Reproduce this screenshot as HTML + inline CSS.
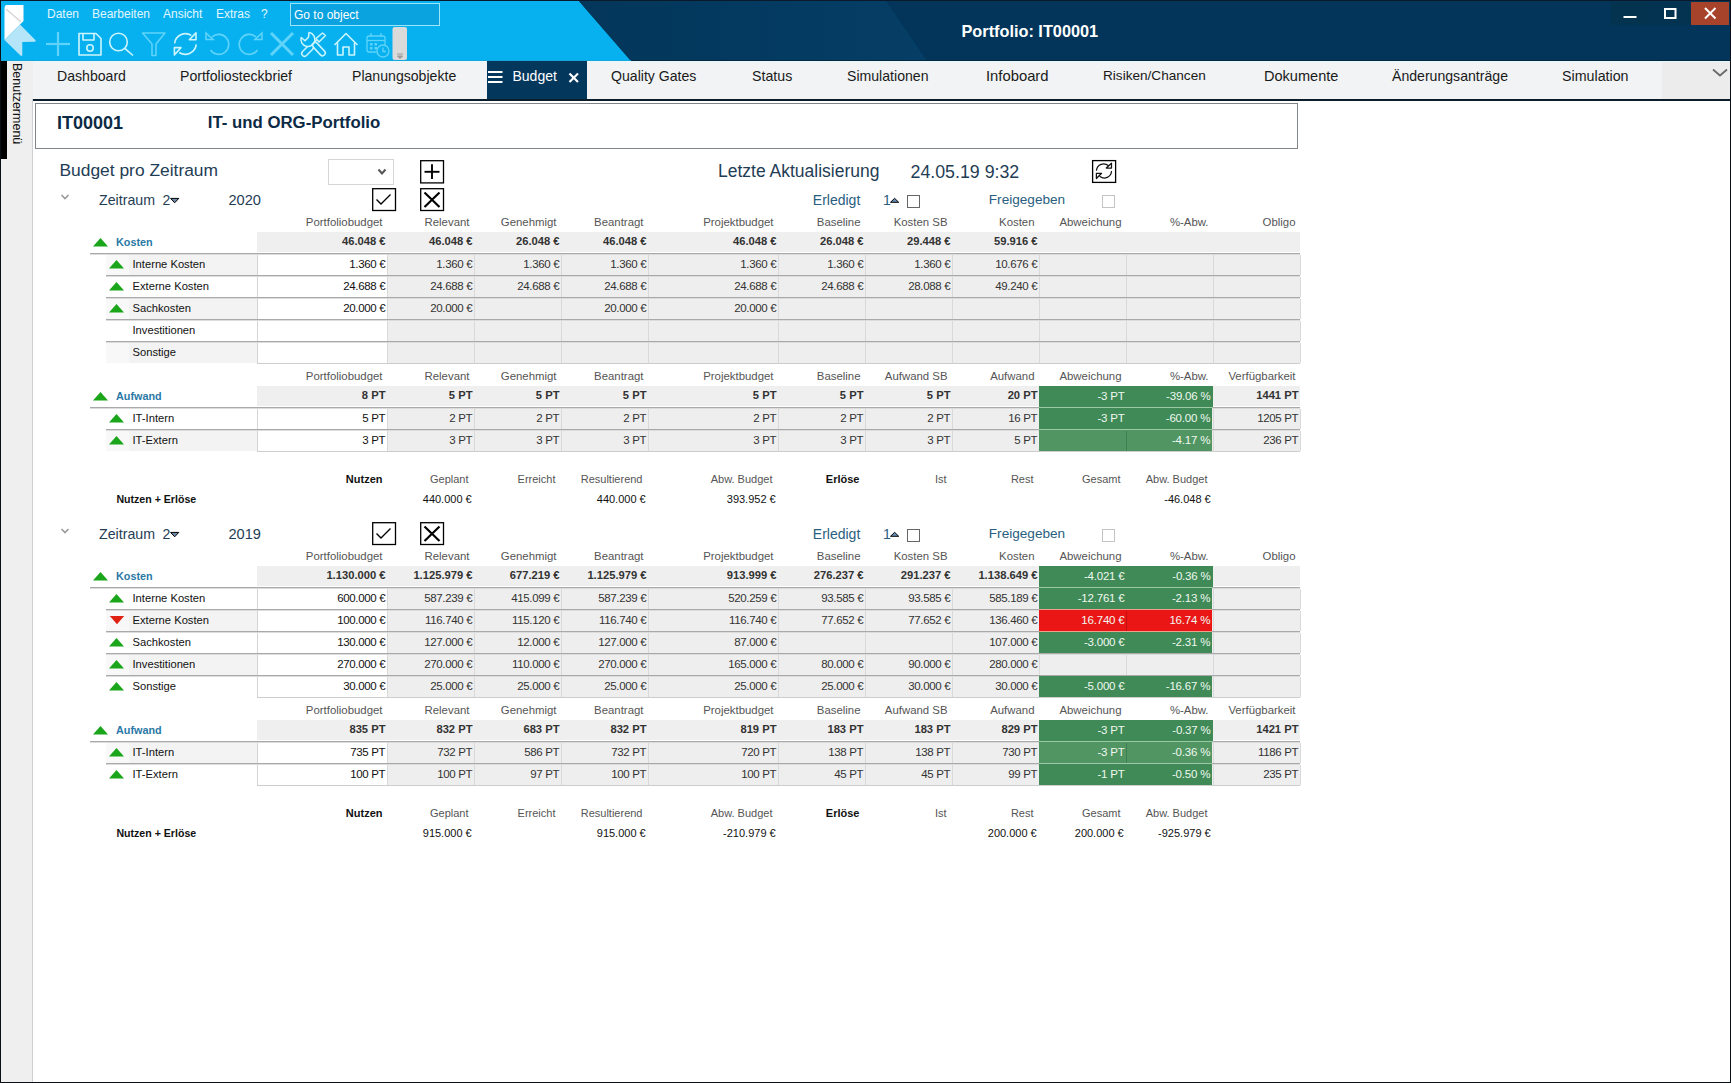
<!DOCTYPE html><html><head><meta charset="utf-8"><style>
html,body{margin:0;padding:0;}
body{width:1731px;height:1083px;overflow:hidden;position:relative;background:#fff;font-family:"Liberation Sans", sans-serif;}
</style></head><body>
<svg style="position:absolute;left:0;top:0" width="1731" height="61"><rect x="0" y="0" width="1731" height="61" fill="#03355a"/><polygon points="578,0 885,0 927,61 631,61" fill="#04395e"/><polygon points="0,0 578,0 631,61 0,61" fill="#07b1ef"/><rect x="0" y="0" width="1731" height="1" fill="#0a1a2a"/><polygon points="5,6 6,5 23.5,5 23.5,21 20,24.6 4.5,40 4.5,8" fill="#ffffff"/><polygon points="20,24.6 35.8,40.5 35,41.8 22.3,42 22.3,55.5 21,56 4.5,40" fill="#b5e5f8"/><line x1="6" y1="9" x2="21" y2="22" stroke="#d6d6d6" stroke-width="1.5"/></svg>
<div style="position:absolute;left:578px;top:1px;width:349px;height:60px;background:linear-gradient(90deg,#03365a,#053e66);clip-path:polygon(0.9px 0,307.7px 0,349px 60px,53px 60px);"></div>
<div style="position:absolute;left:47px;top:4.0px;height:20px;line-height:20px;font-size:12px;color:#e2f6fd;font-weight:400;white-space:nowrap;">Daten</div>
<div style="position:absolute;left:92px;top:4.0px;height:20px;line-height:20px;font-size:12px;color:#e2f6fd;font-weight:400;white-space:nowrap;">Bearbeiten</div>
<div style="position:absolute;left:163px;top:4.0px;height:20px;line-height:20px;font-size:12px;color:#e2f6fd;font-weight:400;white-space:nowrap;">Ansicht</div>
<div style="position:absolute;left:216px;top:4.0px;height:20px;line-height:20px;font-size:12px;color:#e2f6fd;font-weight:400;white-space:nowrap;">Extras</div>
<div style="position:absolute;left:261px;top:4.0px;height:20px;line-height:20px;font-size:12px;color:#e2f6fd;font-weight:400;white-space:nowrap;">?</div>
<div style="position:absolute;left:290px;top:3px;width:148px;height:21px;border:1px solid #9fe5fa;background:#0aa3df;"></div>
<div style="position:absolute;left:294px;top:4.5px;height:20px;line-height:20px;font-size:12px;color:#ffffff;font-weight:400;white-space:nowrap;">Go to object</div>
<svg style="position:absolute;left:0;top:25" width="420" height="36" fill="none" stroke-linecap="butt">
<g stroke="#5fd3f9" stroke-width="2.2"><line x1="46" y1="19" x2="70" y2="19"/><line x1="58" y1="7" x2="58" y2="31"/></g>
<g stroke="#cdf5fe" stroke-width="1.6" stroke-linejoin="round"><path d="M79,8.5 H96 L101,13.5 V30 H79 Z"/><path d="M83,8.5 V15 H94 V8.5"/><circle cx="90" cy="23" r="3.2"/></g>
<g stroke="#cdf5fe" stroke-width="1.6"><circle cx="118.5" cy="17" r="8.8"/><line x1="124.8" y1="23.3" x2="133" y2="30.5"/></g>
<g stroke="#5fd3f9" stroke-width="1.6" stroke-linejoin="round"><path d="M142.5,8 H165 L156,19 V30.5 H152 V19 Z"/></g>
<g stroke="#cdf5fe" stroke-width="1.6" stroke-linejoin="round"><path d="M174.6,18.4 A11,11 0 0 1 191.3,10.4"/><path d="M189.3,14.8 L196,7.9 L196,14.8 Z"/><path d="M196.2,19.4 A11,11 0 0 1 179.2,27.5"/><path d="M174.4,22.6 L181,22.6 L174.4,29.9 Z"/></g>
<g stroke="#5fd3f9" stroke-width="1.6"><path d="M212,12 A10,10 0 1 1 210.5,25"/><path d="M206,8 L206,14.5 L213,14.5 Z"/></g>
<g stroke="#5fd3f9" stroke-width="1.6"><path d="M256,12 A10,10 0 1 0 257.5,25"/><path d="M262,8 L262,14.5 L255,14.5 Z"/></g>
<g stroke="#5fd3f9" stroke-width="3"><line x1="271" y1="8" x2="293" y2="30"/><line x1="293" y1="8" x2="271" y2="30"/></g>
<g stroke="#cdf5fe" stroke-width="1.5" stroke-linejoin="round" stroke-linecap="round"><line x1="315" y1="20" x2="322.5" y2="28" stroke-width="7"/><line x1="315" y1="20" x2="322.5" y2="28" stroke-width="4" stroke="#07b1ef"/><line x1="310.5" y1="22.5" x2="304.5" y2="28.5" stroke-width="7"/><line x1="310.5" y1="22.5" x2="304.5" y2="28.5" stroke-width="4" stroke="#07b1ef"/><path d="M309,7.6 A7,7 0 1 1 301.2,12.5 L305,15.8 L308.5,12.2 Z" fill="#07b1ef"/><path d="M312,19.5 L317.5,14"/><path d="M316,13.5 L322.5,8 L325.5,10.5 L319,17 Z" fill="#07b1ef"/></g>
<g stroke="#cdf5fe" stroke-width="1.6" stroke-linejoin="round"><path d="M334.5,20 L346,8.5 L357.5,20"/><path d="M337.5,17.5 V30 H343 V22 H349 V30 H354.5 V17.5"/></g>
<g stroke="#5fd3f9" stroke-width="1.3"><rect x="367" y="11" width="18" height="16" rx="2"/><line x1="367" y1="15.5" x2="385" y2="15.5"/><line x1="371" y1="8" x2="371" y2="12"/><line x1="381" y1="8" x2="381" y2="12"/><circle cx="383" cy="26" r="6" fill="#07b1ef"/><path d="M383,22.5 V26.5 H386"/></g>
<g fill="#5fd3f9"><rect x="370" y="18" width="2.5" height="2.5"/><rect x="374.5" y="18" width="2.5" height="2.5"/><rect x="370" y="22" width="2.5" height="2.5"/><rect x="374.5" y="22" width="2.5" height="2.5"/></g>
<rect x="392.5" y="2" width="14.5" height="33" rx="2" fill="#dadada"/>
<path d="M397,29 H403 M397.5,31 L400,33.5 L402.5,31 Z" stroke="#9a9a9a" stroke-width="1" fill="#9a9a9a"/>
</svg>
<div style="position:absolute;left:961.5px;top:20.5px;height:20px;line-height:20px;font-size:16.3px;color:#ffffff;font-weight:700;white-space:nowrap;">Portfolio: IT00001</div>
<div style="position:absolute;left:1611px;top:2px;width:39px;height:23px;background:#04334f;"></div>
<div style="position:absolute;left:1650px;top:2px;width:41px;height:23px;background:#043352;"></div>
<div style="position:absolute;left:1691px;top:2px;width:38px;height:23px;background:#a8432b;"></div>
<svg style="position:absolute;left:1600;top:0" width="131" height="30"></svg>
<svg style="position:absolute;left:0;top:0" width="1731" height="30" stroke="#ffffff" fill="none"><line x1="1623.5" y1="17" x2="1636.5" y2="17" stroke-width="2"/><rect x="1665" y="9" width="10.5" height="9" stroke-width="2"/><line x1="1705" y1="8" x2="1715.5" y2="18.5" stroke-width="2"/><line x1="1715.5" y1="8" x2="1705" y2="18.5" stroke-width="2"/></svg>
<div style="position:absolute;left:0px;top:0px;width:1px;height:1083px;background:#0a0f18;"></div>
<div style="position:absolute;left:1730px;top:0px;width:1px;height:1083px;background:#0a0f18;"></div>
<div style="position:absolute;left:0px;top:1082px;width:1731px;height:1px;background:#0a0f18;"></div>
<div style="position:absolute;left:1px;top:61px;width:32px;height:1021px;background:#efefef;"></div>
<div style="position:absolute;left:1px;top:61px;width:6px;height:98px;background:#000;"></div>
<div style="position:absolute;left:32px;top:99px;width:1px;height:983px;background:#cfd0d4;"></div>
<div style="position:absolute;left:9px;top:63px;width:16px;height:84px;writing-mode:vertical-rl;font-size:12.5px;line-height:16px;color:#111;white-space:nowrap;">Benutzermenü</div>
<div style="position:absolute;left:33px;top:61px;width:1697px;height:38px;background:#f1f3f4;"></div>
<div style="position:absolute;left:1662px;top:61px;width:68px;height:38px;background:#ececec;"></div>
<div style="position:absolute;left:33px;top:61px;width:1697px;height:1px;background:#e4f9fd;"></div>
<div style="position:absolute;left:1px;top:60px;width:630px;height:1px;background:#16a6dc;"></div>
<div style="position:absolute;left:631px;top:60px;width:1099px;height:1px;background:#06263c;"></div>
<div style="position:absolute;left:33px;top:99px;width:1697px;height:2px;background:#0b1c2b;"></div>
<div style="position:absolute;left:487px;top:61px;width:100px;height:38px;background:#03375c;"></div>
<div style="position:absolute;left:57px;top:66.3px;height:20px;line-height:20px;font-size:14.1px;color:#1a1a1a;font-weight:400;white-space:nowrap;">Dashboard</div>
<div style="position:absolute;left:180px;top:66.3px;height:20px;line-height:20px;font-size:14.1px;color:#1a1a1a;font-weight:400;white-space:nowrap;">Portfoliosteckbrief</div>
<div style="position:absolute;left:352px;top:66.3px;height:20px;line-height:20px;font-size:14.1px;color:#1a1a1a;font-weight:400;white-space:nowrap;">Planungsobjekte</div>
<div style="position:absolute;left:611px;top:66.3px;height:20px;line-height:20px;font-size:14.1px;color:#1a1a1a;font-weight:400;white-space:nowrap;">Quality Gates</div>
<div style="position:absolute;left:752px;top:66.3px;height:20px;line-height:20px;font-size:14.2px;color:#1a1a1a;font-weight:400;white-space:nowrap;">Status</div>
<div style="position:absolute;left:847px;top:66.3px;height:20px;line-height:20px;font-size:14.1px;color:#1a1a1a;font-weight:400;white-space:nowrap;">Simulationen</div>
<div style="position:absolute;left:986px;top:66.3px;height:20px;line-height:20px;font-size:14.8px;color:#1a1a1a;font-weight:400;white-space:nowrap;">Infoboard</div>
<div style="position:absolute;left:1103px;top:66.3px;height:20px;line-height:20px;font-size:13.6px;color:#1a1a1a;font-weight:400;white-space:nowrap;">Risiken/Chancen</div>
<div style="position:absolute;left:1264px;top:66.3px;height:20px;line-height:20px;font-size:14.55px;color:#1a1a1a;font-weight:400;white-space:nowrap;">Dokumente</div>
<div style="position:absolute;left:1392px;top:66.3px;height:20px;line-height:20px;font-size:14.1px;color:#1a1a1a;font-weight:400;white-space:nowrap;">Änderungsanträge</div>
<div style="position:absolute;left:1562px;top:66.3px;height:20px;line-height:20px;font-size:14.25px;color:#1a1a1a;font-weight:400;white-space:nowrap;">Simulation</div>
<div style="position:absolute;left:512.5px;top:66.0px;height:20px;line-height:20px;font-size:14px;color:#ffffff;font-weight:400;white-space:nowrap;">Budget</div>
<svg style="position:absolute;left:480px;top:61px" width="110" height="38" stroke="#ffffff"><line x1="8" y1="11" x2="22.5" y2="11" stroke-width="2"/><line x1="8" y1="16" x2="22.5" y2="16" stroke-width="2"/><line x1="8" y1="21" x2="22.5" y2="21" stroke-width="2"/><line x1="89.5" y1="12.5" x2="98" y2="21" stroke-width="2.2"/><line x1="98" y1="12.5" x2="89.5" y2="21" stroke-width="2.2"/></svg>
<svg style="position:absolute;left:1708px;top:64px" width="22" height="16"><path d="M5,5.5 L12,11.5 L19,5.5" stroke="#6a6a6a" stroke-width="1.8" fill="none"/></svg>
<div style="position:absolute;left:35px;top:103px;width:1261px;height:44px;border:1px solid #80858a;background:#fff;"></div>
<div style="position:absolute;left:57px;top:113.0px;height:20px;line-height:20px;font-size:18px;color:#0d2a45;font-weight:700;white-space:nowrap;">IT00001</div>
<div style="position:absolute;left:207.8px;top:113.0px;height:20px;line-height:20px;font-size:16.8px;color:#0d2a45;font-weight:700;white-space:nowrap;">IT- und ORG-Portfolio</div>
<div style="position:absolute;left:59.5px;top:160.3px;height:20px;line-height:20px;font-size:17.4px;color:#1f3d55;font-weight:400;white-space:nowrap;">Budget pro Zeitraum</div>
<div style="position:absolute;left:718px;top:160.5px;height:20px;line-height:20px;font-size:17.5px;color:#1f3d55;font-weight:400;white-space:nowrap;">Letzte Aktualisierung</div>
<div style="position:absolute;left:910.5px;top:162.3px;height:20px;line-height:20px;font-size:17.8px;color:#1f3d55;font-weight:400;white-space:nowrap;">24.05.19 9:32</div>
<div style="position:absolute;left:328px;top:159px;width:64px;height:24px;border:1px solid #d6d6d6;background:#fff;"></div>
<svg style="position:absolute;left:376px;top:167px" width="12" height="10"><path d="M2.5,2.5 L6,6.5 L9.5,2.5" stroke="#555" stroke-width="2" fill="none"/></svg>
<svg style="position:absolute;left:419px;top:159px" width="27" height="26"><rect x="1.7" y="1.7" width="22.8" height="22.2" fill="#fff" stroke="#000" stroke-width="1.3"/><line x1="5.5" y1="12.8" x2="20.5" y2="12.8" stroke="#000" stroke-width="1.9"/><line x1="13" y1="5.3" x2="13" y2="20" stroke="#000" stroke-width="1.9"/></svg>
<svg style="position:absolute;left:1091px;top:159px" width="27" height="26"><rect x="1.6" y="1.6" width="23" height="21.8" fill="#fff" stroke="#000" stroke-width="1.3"/><g stroke="#111" stroke-width="1.25" fill="none" stroke-linejoin="round" stroke-linecap="round"><path d="M5.5,11.2 A7.2,7.2 0 0 1 17.3,6.6"/><path d="M15.3,9 L20.5,4.2 L20.5,9 Z"/><path d="M20.5,12.5 A7.2,7.2 0 0 1 9,17.5"/><path d="M5.4,14.3 H10.6 L5.4,19.5 Z"/></g></svg>
<svg style="position:absolute;left:59px;top:192px" width="12" height="10"><path d="M2.5,3 L6,6.5 L9.5,3" stroke="#9a9a9a" stroke-width="1.6" fill="none"/></svg>
<div style="position:absolute;left:99px;top:190.0px;height:20px;line-height:20px;font-size:14.2px;color:#1f3d55;font-weight:400;white-space:nowrap;">Zeitraum</div>
<div style="position:absolute;left:162.5px;top:190.0px;height:20px;line-height:20px;font-size:14px;color:#1f3d55;font-weight:400;white-space:nowrap;">2</div>
<svg style="position:absolute;left:169px;top:196px" width="12" height="9"><path d="M1.6,2.4 L9.8,2.4 L5.7,6.8 Z" fill="#6d88a8" stroke="#000" stroke-width="1" stroke-linejoin="miter"/></svg>
<div style="position:absolute;left:228.5px;top:190.0px;height:20px;line-height:20px;font-size:14.6px;color:#1f3d55;font-weight:400;white-space:nowrap;">2020</div>
<svg style="position:absolute;left:371px;top:187px" width="27" height="26"><rect x="1.7" y="1.7" width="22.8" height="21.8" fill="#fff" stroke="#000" stroke-width="1.3"/><path d="M5.5,12.5 L10,17 L19.5,7.5" stroke="#000" stroke-width="1.4" fill="none"/></svg>
<svg style="position:absolute;left:419px;top:187px" width="27" height="26"><rect x="1.7" y="1.7" width="22.8" height="21.8" fill="#fff" stroke="#000" stroke-width="1.3"/><path d="M5.5,5.5 L20.5,20 M20.5,5.5 L5.5,20" stroke="#000" stroke-width="2.2" fill="none"/></svg>
<div style="position:absolute;left:812.8px;top:190.0px;height:20px;line-height:20px;font-size:14px;color:#2a5e80;font-weight:400;white-space:nowrap;">Erledigt</div>
<div style="position:absolute;left:883px;top:190.0px;height:20px;line-height:20px;font-size:14px;color:#2a5e80;font-weight:400;white-space:nowrap;">1</div>
<svg style="position:absolute;left:889px;top:196px" width="12" height="9"><path d="M1.5,6.3 L9.7,6.3 L5.6,2.3 Z" fill="#6a90b8" stroke="#000" stroke-width="1"/></svg>
<div style="position:absolute;left:907px;top:195px;width:11px;height:11px;border:1.3px solid #666;background:#fff;"></div>
<div style="position:absolute;left:988.8px;top:190.0px;height:20px;line-height:20px;font-size:13.6px;color:#2a5e80;font-weight:400;white-space:nowrap;">Freigegeben</div>
<div style="position:absolute;left:1102px;top:195px;width:11px;height:11px;border:1px solid #c4c4c4;background:#fff;"></div>
<div style="position:absolute;right:1348.5px;top:212.0px;height:20px;line-height:20px;font-size:11.4px;color:#555;font-weight:400;white-space:nowrap;text-align:right;">Portfoliobudget</div>
<div style="position:absolute;right:1261.5px;top:212.0px;height:20px;line-height:20px;font-size:11.4px;color:#555;font-weight:400;white-space:nowrap;text-align:right;">Relevant</div>
<div style="position:absolute;right:1174.5px;top:212.0px;height:20px;line-height:20px;font-size:11.4px;color:#555;font-weight:400;white-space:nowrap;text-align:right;">Genehmigt</div>
<div style="position:absolute;right:1087.5px;top:212.0px;height:20px;line-height:20px;font-size:11.4px;color:#555;font-weight:400;white-space:nowrap;text-align:right;">Beantragt</div>
<div style="position:absolute;right:957.5px;top:212.0px;height:20px;line-height:20px;font-size:11.4px;color:#555;font-weight:400;white-space:nowrap;text-align:right;">Projektbudget</div>
<div style="position:absolute;right:870.5px;top:212.0px;height:20px;line-height:20px;font-size:11.4px;color:#555;font-weight:400;white-space:nowrap;text-align:right;">Baseline</div>
<div style="position:absolute;right:783.5px;top:212.0px;height:20px;line-height:20px;font-size:11.4px;color:#555;font-weight:400;white-space:nowrap;text-align:right;">Kosten SB</div>
<div style="position:absolute;right:696.5px;top:212.0px;height:20px;line-height:20px;font-size:11.4px;color:#555;font-weight:400;white-space:nowrap;text-align:right;">Kosten</div>
<div style="position:absolute;right:609.5px;top:212.0px;height:20px;line-height:20px;font-size:11.4px;color:#555;font-weight:400;white-space:nowrap;text-align:right;">Abweichung</div>
<div style="position:absolute;right:522.5px;top:212.0px;height:20px;line-height:20px;font-size:11.4px;color:#555;font-weight:400;white-space:nowrap;text-align:right;">%-Abw.</div>
<div style="position:absolute;right:435.5px;top:212.0px;height:20px;line-height:20px;font-size:11.4px;color:#555;font-weight:400;white-space:nowrap;text-align:right;">Obligo</div>
<div style="position:absolute;left:257px;top:232px;width:1043px;height:20px;background:#efefef;"></div>
<svg style="position:absolute;left:93px;top:237px" width="17" height="11"><path d="M0,9.6 L7.5,1 L15,9.6 Z" fill="#1aa51a"/></svg>
<div style="position:absolute;left:116px;top:232.2px;height:20px;line-height:20px;font-size:10.8px;color:#2a78a6;font-weight:700;white-space:nowrap;">Kosten</div>
<div style="position:absolute;right:1345.5px;top:231.0px;height:20px;line-height:20px;font-size:11.2px;color:#333;font-weight:700;white-space:nowrap;text-align:right;">46.048 €</div>
<div style="position:absolute;right:1258.5px;top:231.0px;height:20px;line-height:20px;font-size:11.2px;color:#333;font-weight:700;white-space:nowrap;text-align:right;">46.048 €</div>
<div style="position:absolute;right:1171.5px;top:231.0px;height:20px;line-height:20px;font-size:11.2px;color:#333;font-weight:700;white-space:nowrap;text-align:right;">26.048 €</div>
<div style="position:absolute;right:1084.5px;top:231.0px;height:20px;line-height:20px;font-size:11.2px;color:#333;font-weight:700;white-space:nowrap;text-align:right;">46.048 €</div>
<div style="position:absolute;right:954.5px;top:231.0px;height:20px;line-height:20px;font-size:11.2px;color:#333;font-weight:700;white-space:nowrap;text-align:right;">46.048 €</div>
<div style="position:absolute;right:867.5px;top:231.0px;height:20px;line-height:20px;font-size:11.2px;color:#333;font-weight:700;white-space:nowrap;text-align:right;">26.048 €</div>
<div style="position:absolute;right:780.5px;top:231.0px;height:20px;line-height:20px;font-size:11.2px;color:#333;font-weight:700;white-space:nowrap;text-align:right;">29.448 €</div>
<div style="position:absolute;right:693.5px;top:231.0px;height:20px;line-height:20px;font-size:11.2px;color:#333;font-weight:700;white-space:nowrap;text-align:right;">59.916 €</div>
<div style="position:absolute;left:90px;top:253px;width:1210px;height:1px;background:#a9a9a9;"></div>
<div style="position:absolute;left:90px;top:254px;width:1210px;height:1px;background:#dcdcdc;"></div>
<div style="position:absolute;left:106px;top:255px;width:23px;height:20px;background:#f8f8f8;"></div>
<div style="position:absolute;left:129px;top:255px;width:128px;height:20px;background:#f3f3f3;"></div>
<div style="position:absolute;left:257px;top:255px;width:130px;height:20px;background:#ffffff;"></div>
<div style="position:absolute;left:387px;top:255px;width:913px;height:20px;background:#eeeeee;"></div>
<div style="position:absolute;left:257px;top:255px;width:1px;height:20px;background:#d4d4d4;"></div>
<div style="position:absolute;left:387px;top:255px;width:1px;height:20px;background:#d9d9d9;"></div>
<div style="position:absolute;left:474px;top:255px;width:1px;height:20px;background:#d9d9d9;"></div>
<div style="position:absolute;left:561px;top:255px;width:1px;height:20px;background:#d9d9d9;"></div>
<div style="position:absolute;left:648px;top:255px;width:1px;height:20px;background:#d9d9d9;"></div>
<div style="position:absolute;left:778px;top:255px;width:1px;height:20px;background:#d9d9d9;"></div>
<div style="position:absolute;left:865px;top:255px;width:1px;height:20px;background:#d9d9d9;"></div>
<div style="position:absolute;left:952px;top:255px;width:1px;height:20px;background:#d9d9d9;"></div>
<div style="position:absolute;left:1039px;top:255px;width:1px;height:20px;background:#d9d9d9;"></div>
<div style="position:absolute;left:1126px;top:255px;width:1px;height:20px;background:#d9d9d9;"></div>
<div style="position:absolute;left:1213px;top:255px;width:1px;height:20px;background:#d9d9d9;"></div>
<div style="position:absolute;left:1300px;top:255px;width:1px;height:20px;background:#d9d9d9;"></div>
<svg style="position:absolute;left:109px;top:259px" width="17" height="11"><path d="M0,9.6 L7.5,1 L15,9.6 Z" fill="#1aa51a"/></svg>
<div style="position:absolute;left:132.5px;top:253.7px;height:20px;line-height:20px;font-size:11.2px;color:#111;font-weight:400;white-space:nowrap;">Interne Kosten</div>
<div style="position:absolute;right:1345.8px;top:253.7px;height:20px;line-height:20px;font-size:11.5px;color:#111;font-weight:400;white-space:nowrap;text-align:right;letter-spacing:-0.35px;">1.360 €</div>
<div style="position:absolute;right:1258.8px;top:253.7px;height:20px;line-height:20px;font-size:11.5px;color:#333;font-weight:400;white-space:nowrap;text-align:right;letter-spacing:-0.35px;">1.360 €</div>
<div style="position:absolute;right:1171.8px;top:253.7px;height:20px;line-height:20px;font-size:11.5px;color:#333;font-weight:400;white-space:nowrap;text-align:right;letter-spacing:-0.35px;">1.360 €</div>
<div style="position:absolute;right:1084.8px;top:253.7px;height:20px;line-height:20px;font-size:11.5px;color:#333;font-weight:400;white-space:nowrap;text-align:right;letter-spacing:-0.35px;">1.360 €</div>
<div style="position:absolute;right:954.8px;top:253.7px;height:20px;line-height:20px;font-size:11.5px;color:#333;font-weight:400;white-space:nowrap;text-align:right;letter-spacing:-0.35px;">1.360 €</div>
<div style="position:absolute;right:867.8px;top:253.7px;height:20px;line-height:20px;font-size:11.5px;color:#333;font-weight:400;white-space:nowrap;text-align:right;letter-spacing:-0.35px;">1.360 €</div>
<div style="position:absolute;right:780.8px;top:253.7px;height:20px;line-height:20px;font-size:11.5px;color:#333;font-weight:400;white-space:nowrap;text-align:right;letter-spacing:-0.35px;">1.360 €</div>
<div style="position:absolute;right:693.8000000000002px;top:253.7px;height:20px;line-height:20px;font-size:11.5px;color:#333;font-weight:400;white-space:nowrap;text-align:right;letter-spacing:-0.35px;">10.676 €</div>
<div style="position:absolute;left:106px;top:275px;width:1194px;height:1px;background:#a9a9a9;"></div>
<div style="position:absolute;left:106px;top:276px;width:1194px;height:1px;background:#dcdcdc;"></div>
<div style="position:absolute;left:257px;top:277px;width:130px;height:20px;background:#ffffff;"></div>
<div style="position:absolute;left:387px;top:277px;width:913px;height:20px;background:#eeeeee;"></div>
<div style="position:absolute;left:257px;top:277px;width:1px;height:20px;background:#d4d4d4;"></div>
<div style="position:absolute;left:387px;top:277px;width:1px;height:20px;background:#d9d9d9;"></div>
<div style="position:absolute;left:474px;top:277px;width:1px;height:20px;background:#d9d9d9;"></div>
<div style="position:absolute;left:561px;top:277px;width:1px;height:20px;background:#d9d9d9;"></div>
<div style="position:absolute;left:648px;top:277px;width:1px;height:20px;background:#d9d9d9;"></div>
<div style="position:absolute;left:778px;top:277px;width:1px;height:20px;background:#d9d9d9;"></div>
<div style="position:absolute;left:865px;top:277px;width:1px;height:20px;background:#d9d9d9;"></div>
<div style="position:absolute;left:952px;top:277px;width:1px;height:20px;background:#d9d9d9;"></div>
<div style="position:absolute;left:1039px;top:277px;width:1px;height:20px;background:#d9d9d9;"></div>
<div style="position:absolute;left:1126px;top:277px;width:1px;height:20px;background:#d9d9d9;"></div>
<div style="position:absolute;left:1213px;top:277px;width:1px;height:20px;background:#d9d9d9;"></div>
<div style="position:absolute;left:1300px;top:277px;width:1px;height:20px;background:#d9d9d9;"></div>
<svg style="position:absolute;left:109px;top:281px" width="17" height="11"><path d="M0,9.6 L7.5,1 L15,9.6 Z" fill="#1aa51a"/></svg>
<div style="position:absolute;left:132.5px;top:275.7px;height:20px;line-height:20px;font-size:11.2px;color:#111;font-weight:400;white-space:nowrap;">Externe Kosten</div>
<div style="position:absolute;right:1345.8px;top:275.7px;height:20px;line-height:20px;font-size:11.5px;color:#111;font-weight:400;white-space:nowrap;text-align:right;letter-spacing:-0.35px;">24.688 €</div>
<div style="position:absolute;right:1258.8px;top:275.7px;height:20px;line-height:20px;font-size:11.5px;color:#333;font-weight:400;white-space:nowrap;text-align:right;letter-spacing:-0.35px;">24.688 €</div>
<div style="position:absolute;right:1171.8px;top:275.7px;height:20px;line-height:20px;font-size:11.5px;color:#333;font-weight:400;white-space:nowrap;text-align:right;letter-spacing:-0.35px;">24.688 €</div>
<div style="position:absolute;right:1084.8px;top:275.7px;height:20px;line-height:20px;font-size:11.5px;color:#333;font-weight:400;white-space:nowrap;text-align:right;letter-spacing:-0.35px;">24.688 €</div>
<div style="position:absolute;right:954.8px;top:275.7px;height:20px;line-height:20px;font-size:11.5px;color:#333;font-weight:400;white-space:nowrap;text-align:right;letter-spacing:-0.35px;">24.688 €</div>
<div style="position:absolute;right:867.8px;top:275.7px;height:20px;line-height:20px;font-size:11.5px;color:#333;font-weight:400;white-space:nowrap;text-align:right;letter-spacing:-0.35px;">24.688 €</div>
<div style="position:absolute;right:780.8px;top:275.7px;height:20px;line-height:20px;font-size:11.5px;color:#333;font-weight:400;white-space:nowrap;text-align:right;letter-spacing:-0.35px;">28.088 €</div>
<div style="position:absolute;right:693.8000000000002px;top:275.7px;height:20px;line-height:20px;font-size:11.5px;color:#333;font-weight:400;white-space:nowrap;text-align:right;letter-spacing:-0.35px;">49.240 €</div>
<div style="position:absolute;left:106px;top:297px;width:1194px;height:1px;background:#a9a9a9;"></div>
<div style="position:absolute;left:106px;top:298px;width:1194px;height:1px;background:#dcdcdc;"></div>
<div style="position:absolute;left:106px;top:299px;width:23px;height:20px;background:#f8f8f8;"></div>
<div style="position:absolute;left:129px;top:299px;width:128px;height:20px;background:#f3f3f3;"></div>
<div style="position:absolute;left:257px;top:299px;width:130px;height:20px;background:#ffffff;"></div>
<div style="position:absolute;left:387px;top:299px;width:913px;height:20px;background:#eeeeee;"></div>
<div style="position:absolute;left:257px;top:299px;width:1px;height:20px;background:#d4d4d4;"></div>
<div style="position:absolute;left:387px;top:299px;width:1px;height:20px;background:#d9d9d9;"></div>
<div style="position:absolute;left:474px;top:299px;width:1px;height:20px;background:#d9d9d9;"></div>
<div style="position:absolute;left:561px;top:299px;width:1px;height:20px;background:#d9d9d9;"></div>
<div style="position:absolute;left:648px;top:299px;width:1px;height:20px;background:#d9d9d9;"></div>
<div style="position:absolute;left:778px;top:299px;width:1px;height:20px;background:#d9d9d9;"></div>
<div style="position:absolute;left:865px;top:299px;width:1px;height:20px;background:#d9d9d9;"></div>
<div style="position:absolute;left:952px;top:299px;width:1px;height:20px;background:#d9d9d9;"></div>
<div style="position:absolute;left:1039px;top:299px;width:1px;height:20px;background:#d9d9d9;"></div>
<div style="position:absolute;left:1126px;top:299px;width:1px;height:20px;background:#d9d9d9;"></div>
<div style="position:absolute;left:1213px;top:299px;width:1px;height:20px;background:#d9d9d9;"></div>
<div style="position:absolute;left:1300px;top:299px;width:1px;height:20px;background:#d9d9d9;"></div>
<svg style="position:absolute;left:109px;top:303px" width="17" height="11"><path d="M0,9.6 L7.5,1 L15,9.6 Z" fill="#1aa51a"/></svg>
<div style="position:absolute;left:132.5px;top:297.7px;height:20px;line-height:20px;font-size:11.2px;color:#111;font-weight:400;white-space:nowrap;">Sachkosten</div>
<div style="position:absolute;right:1345.8px;top:297.7px;height:20px;line-height:20px;font-size:11.5px;color:#111;font-weight:400;white-space:nowrap;text-align:right;letter-spacing:-0.35px;">20.000 €</div>
<div style="position:absolute;right:1258.8px;top:297.7px;height:20px;line-height:20px;font-size:11.5px;color:#333;font-weight:400;white-space:nowrap;text-align:right;letter-spacing:-0.35px;">20.000 €</div>
<div style="position:absolute;right:1084.8px;top:297.7px;height:20px;line-height:20px;font-size:11.5px;color:#333;font-weight:400;white-space:nowrap;text-align:right;letter-spacing:-0.35px;">20.000 €</div>
<div style="position:absolute;right:954.8px;top:297.7px;height:20px;line-height:20px;font-size:11.5px;color:#333;font-weight:400;white-space:nowrap;text-align:right;letter-spacing:-0.35px;">20.000 €</div>
<div style="position:absolute;left:106px;top:319px;width:1194px;height:1px;background:#a9a9a9;"></div>
<div style="position:absolute;left:106px;top:320px;width:1194px;height:1px;background:#dcdcdc;"></div>
<div style="position:absolute;left:257px;top:321px;width:130px;height:20px;background:#ffffff;"></div>
<div style="position:absolute;left:387px;top:321px;width:913px;height:20px;background:#eeeeee;"></div>
<div style="position:absolute;left:257px;top:321px;width:1px;height:20px;background:#d4d4d4;"></div>
<div style="position:absolute;left:387px;top:321px;width:1px;height:20px;background:#d9d9d9;"></div>
<div style="position:absolute;left:474px;top:321px;width:1px;height:20px;background:#d9d9d9;"></div>
<div style="position:absolute;left:561px;top:321px;width:1px;height:20px;background:#d9d9d9;"></div>
<div style="position:absolute;left:648px;top:321px;width:1px;height:20px;background:#d9d9d9;"></div>
<div style="position:absolute;left:778px;top:321px;width:1px;height:20px;background:#d9d9d9;"></div>
<div style="position:absolute;left:865px;top:321px;width:1px;height:20px;background:#d9d9d9;"></div>
<div style="position:absolute;left:952px;top:321px;width:1px;height:20px;background:#d9d9d9;"></div>
<div style="position:absolute;left:1039px;top:321px;width:1px;height:20px;background:#d9d9d9;"></div>
<div style="position:absolute;left:1126px;top:321px;width:1px;height:20px;background:#d9d9d9;"></div>
<div style="position:absolute;left:1213px;top:321px;width:1px;height:20px;background:#d9d9d9;"></div>
<div style="position:absolute;left:1300px;top:321px;width:1px;height:20px;background:#d9d9d9;"></div>
<div style="position:absolute;left:132.5px;top:319.7px;height:20px;line-height:20px;font-size:11.2px;color:#111;font-weight:400;white-space:nowrap;">Investitionen</div>
<div style="position:absolute;left:106px;top:341px;width:1194px;height:1px;background:#a9a9a9;"></div>
<div style="position:absolute;left:106px;top:342px;width:1194px;height:1px;background:#dcdcdc;"></div>
<div style="position:absolute;left:106px;top:343px;width:23px;height:20px;background:#f8f8f8;"></div>
<div style="position:absolute;left:129px;top:343px;width:128px;height:20px;background:#f3f3f3;"></div>
<div style="position:absolute;left:257px;top:343px;width:130px;height:20px;background:#ffffff;"></div>
<div style="position:absolute;left:387px;top:343px;width:913px;height:20px;background:#eeeeee;"></div>
<div style="position:absolute;left:257px;top:343px;width:1px;height:20px;background:#d4d4d4;"></div>
<div style="position:absolute;left:387px;top:343px;width:1px;height:20px;background:#d9d9d9;"></div>
<div style="position:absolute;left:474px;top:343px;width:1px;height:20px;background:#d9d9d9;"></div>
<div style="position:absolute;left:561px;top:343px;width:1px;height:20px;background:#d9d9d9;"></div>
<div style="position:absolute;left:648px;top:343px;width:1px;height:20px;background:#d9d9d9;"></div>
<div style="position:absolute;left:778px;top:343px;width:1px;height:20px;background:#d9d9d9;"></div>
<div style="position:absolute;left:865px;top:343px;width:1px;height:20px;background:#d9d9d9;"></div>
<div style="position:absolute;left:952px;top:343px;width:1px;height:20px;background:#d9d9d9;"></div>
<div style="position:absolute;left:1039px;top:343px;width:1px;height:20px;background:#d9d9d9;"></div>
<div style="position:absolute;left:1126px;top:343px;width:1px;height:20px;background:#d9d9d9;"></div>
<div style="position:absolute;left:1213px;top:343px;width:1px;height:20px;background:#d9d9d9;"></div>
<div style="position:absolute;left:1300px;top:343px;width:1px;height:20px;background:#d9d9d9;"></div>
<div style="position:absolute;left:132.5px;top:341.7px;height:20px;line-height:20px;font-size:11.2px;color:#111;font-weight:400;white-space:nowrap;">Sonstige</div>
<div style="position:absolute;left:257px;top:363px;width:1043px;height:1px;background:#cdcdcd;"></div>
<div style="position:absolute;right:1348.5px;top:366.0px;height:20px;line-height:20px;font-size:11.4px;color:#555;font-weight:400;white-space:nowrap;text-align:right;">Portfoliobudget</div>
<div style="position:absolute;right:1261.5px;top:366.0px;height:20px;line-height:20px;font-size:11.4px;color:#555;font-weight:400;white-space:nowrap;text-align:right;">Relevant</div>
<div style="position:absolute;right:1174.5px;top:366.0px;height:20px;line-height:20px;font-size:11.4px;color:#555;font-weight:400;white-space:nowrap;text-align:right;">Genehmigt</div>
<div style="position:absolute;right:1087.5px;top:366.0px;height:20px;line-height:20px;font-size:11.4px;color:#555;font-weight:400;white-space:nowrap;text-align:right;">Beantragt</div>
<div style="position:absolute;right:957.5px;top:366.0px;height:20px;line-height:20px;font-size:11.4px;color:#555;font-weight:400;white-space:nowrap;text-align:right;">Projektbudget</div>
<div style="position:absolute;right:870.5px;top:366.0px;height:20px;line-height:20px;font-size:11.4px;color:#555;font-weight:400;white-space:nowrap;text-align:right;">Baseline</div>
<div style="position:absolute;right:783.5px;top:366.0px;height:20px;line-height:20px;font-size:11.4px;color:#555;font-weight:400;white-space:nowrap;text-align:right;">Aufwand SB</div>
<div style="position:absolute;right:696.5px;top:366.0px;height:20px;line-height:20px;font-size:11.4px;color:#555;font-weight:400;white-space:nowrap;text-align:right;">Aufwand</div>
<div style="position:absolute;right:609.5px;top:366.0px;height:20px;line-height:20px;font-size:11.4px;color:#555;font-weight:400;white-space:nowrap;text-align:right;">Abweichung</div>
<div style="position:absolute;right:522.5px;top:366.0px;height:20px;line-height:20px;font-size:11.4px;color:#555;font-weight:400;white-space:nowrap;text-align:right;">%-Abw.</div>
<div style="position:absolute;right:435.5px;top:366.0px;height:20px;line-height:20px;font-size:11.4px;color:#555;font-weight:400;white-space:nowrap;text-align:right;">Verfügbarkeit</div>
<div style="position:absolute;left:257px;top:386px;width:1043px;height:20px;background:#efefef;"></div>
<svg style="position:absolute;left:93px;top:391px" width="17" height="11"><path d="M0,9.6 L7.5,1 L15,9.6 Z" fill="#1aa51a"/></svg>
<div style="position:absolute;left:116px;top:386.2px;height:20px;line-height:20px;font-size:10.8px;color:#2a78a6;font-weight:700;white-space:nowrap;">Aufwand</div>
<div style="position:absolute;left:1039px;top:386px;width:87px;height:20px;background:#3f8a57;"></div>
<div style="position:absolute;left:1126px;top:386px;width:87px;height:20px;background:#3f8a57;"></div>
<div style="position:absolute;right:1345.5px;top:385.0px;height:20px;line-height:20px;font-size:11.2px;color:#333;font-weight:700;white-space:nowrap;text-align:right;">8 PT</div>
<div style="position:absolute;right:1258.5px;top:385.0px;height:20px;line-height:20px;font-size:11.2px;color:#333;font-weight:700;white-space:nowrap;text-align:right;">5 PT</div>
<div style="position:absolute;right:1171.5px;top:385.0px;height:20px;line-height:20px;font-size:11.2px;color:#333;font-weight:700;white-space:nowrap;text-align:right;">5 PT</div>
<div style="position:absolute;right:1084.5px;top:385.0px;height:20px;line-height:20px;font-size:11.2px;color:#333;font-weight:700;white-space:nowrap;text-align:right;">5 PT</div>
<div style="position:absolute;right:954.5px;top:385.0px;height:20px;line-height:20px;font-size:11.2px;color:#333;font-weight:700;white-space:nowrap;text-align:right;">5 PT</div>
<div style="position:absolute;right:867.5px;top:385.0px;height:20px;line-height:20px;font-size:11.2px;color:#333;font-weight:700;white-space:nowrap;text-align:right;">5 PT</div>
<div style="position:absolute;right:780.5px;top:385.0px;height:20px;line-height:20px;font-size:11.2px;color:#333;font-weight:700;white-space:nowrap;text-align:right;">5 PT</div>
<div style="position:absolute;right:693.5px;top:385.0px;height:20px;line-height:20px;font-size:11.2px;color:#333;font-weight:700;white-space:nowrap;text-align:right;">20 PT</div>
<div style="position:absolute;right:606.5px;top:385.5px;height:20px;line-height:20px;font-size:11.5px;color:#f0f8f0;font-weight:400;white-space:nowrap;text-align:right;letter-spacing:-0.2px;">-3 PT</div>
<div style="position:absolute;right:520.5px;top:385.5px;height:20px;line-height:20px;font-size:11.5px;color:#f0f8f0;font-weight:400;white-space:nowrap;text-align:right;letter-spacing:-0.2px;">-39.06 %</div>
<div style="position:absolute;right:432.5px;top:385.0px;height:20px;line-height:20px;font-size:11.2px;color:#333;font-weight:700;white-space:nowrap;text-align:right;">1441 PT</div>
<div style="position:absolute;left:90px;top:407px;width:1210px;height:1px;background:#a9a9a9;"></div>
<div style="position:absolute;left:90px;top:408px;width:1210px;height:1px;background:#dcdcdc;"></div>
<div style="position:absolute;left:257px;top:409px;width:130px;height:20px;background:#ffffff;"></div>
<div style="position:absolute;left:387px;top:409px;width:913px;height:20px;background:#eeeeee;"></div>
<div style="position:absolute;left:257px;top:409px;width:1px;height:20px;background:#d4d4d4;"></div>
<div style="position:absolute;left:387px;top:409px;width:1px;height:20px;background:#d9d9d9;"></div>
<div style="position:absolute;left:474px;top:409px;width:1px;height:20px;background:#d9d9d9;"></div>
<div style="position:absolute;left:561px;top:409px;width:1px;height:20px;background:#d9d9d9;"></div>
<div style="position:absolute;left:648px;top:409px;width:1px;height:20px;background:#d9d9d9;"></div>
<div style="position:absolute;left:778px;top:409px;width:1px;height:20px;background:#d9d9d9;"></div>
<div style="position:absolute;left:865px;top:409px;width:1px;height:20px;background:#d9d9d9;"></div>
<div style="position:absolute;left:952px;top:409px;width:1px;height:20px;background:#d9d9d9;"></div>
<div style="position:absolute;left:1039px;top:409px;width:1px;height:20px;background:#d9d9d9;"></div>
<div style="position:absolute;left:1126px;top:409px;width:1px;height:20px;background:#d9d9d9;"></div>
<div style="position:absolute;left:1213px;top:409px;width:1px;height:20px;background:#d9d9d9;"></div>
<div style="position:absolute;left:1300px;top:409px;width:1px;height:20px;background:#d9d9d9;"></div>
<div style="position:absolute;left:1039px;top:409px;width:87px;height:20px;background:#3f8a57;"></div>
<div style="position:absolute;left:1126px;top:409px;width:86px;height:20px;background:#3f8a57;"></div>
<svg style="position:absolute;left:109px;top:413px" width="17" height="11"><path d="M0,9.6 L7.5,1 L15,9.6 Z" fill="#1aa51a"/></svg>
<div style="position:absolute;left:132.5px;top:407.7px;height:20px;line-height:20px;font-size:11.2px;color:#111;font-weight:400;white-space:nowrap;">IT-Intern</div>
<div style="position:absolute;right:1345.8px;top:407.7px;height:20px;line-height:20px;font-size:11.5px;color:#111;font-weight:400;white-space:nowrap;text-align:right;letter-spacing:-0.35px;">5 PT</div>
<div style="position:absolute;right:1258.8px;top:407.7px;height:20px;line-height:20px;font-size:11.5px;color:#333;font-weight:400;white-space:nowrap;text-align:right;letter-spacing:-0.35px;">2 PT</div>
<div style="position:absolute;right:1171.8px;top:407.7px;height:20px;line-height:20px;font-size:11.5px;color:#333;font-weight:400;white-space:nowrap;text-align:right;letter-spacing:-0.35px;">2 PT</div>
<div style="position:absolute;right:1084.8px;top:407.7px;height:20px;line-height:20px;font-size:11.5px;color:#333;font-weight:400;white-space:nowrap;text-align:right;letter-spacing:-0.35px;">2 PT</div>
<div style="position:absolute;right:954.8px;top:407.7px;height:20px;line-height:20px;font-size:11.5px;color:#333;font-weight:400;white-space:nowrap;text-align:right;letter-spacing:-0.35px;">2 PT</div>
<div style="position:absolute;right:867.8px;top:407.7px;height:20px;line-height:20px;font-size:11.5px;color:#333;font-weight:400;white-space:nowrap;text-align:right;letter-spacing:-0.35px;">2 PT</div>
<div style="position:absolute;right:780.8px;top:407.7px;height:20px;line-height:20px;font-size:11.5px;color:#333;font-weight:400;white-space:nowrap;text-align:right;letter-spacing:-0.35px;">2 PT</div>
<div style="position:absolute;right:693.8000000000002px;top:407.7px;height:20px;line-height:20px;font-size:11.5px;color:#333;font-weight:400;white-space:nowrap;text-align:right;letter-spacing:-0.35px;">16 PT</div>
<div style="position:absolute;right:606.5px;top:407.7px;height:20px;line-height:20px;font-size:11.5px;color:#f0f8f0;font-weight:400;white-space:nowrap;text-align:right;letter-spacing:-0.2px;">-3 PT</div>
<div style="position:absolute;right:520.8px;top:407.7px;height:20px;line-height:20px;font-size:11.5px;color:#f0f8f0;font-weight:400;white-space:nowrap;text-align:right;letter-spacing:-0.2px;">-60.00 %</div>
<div style="position:absolute;right:432.8000000000002px;top:407.7px;height:20px;line-height:20px;font-size:11.5px;color:#333;font-weight:400;white-space:nowrap;text-align:right;letter-spacing:-0.35px;">1205 PT</div>
<div style="position:absolute;left:106px;top:429px;width:1194px;height:1px;background:#a9a9a9;"></div>
<div style="position:absolute;left:106px;top:430px;width:1194px;height:1px;background:#dcdcdc;"></div>
<div style="position:absolute;left:106px;top:431px;width:23px;height:20px;background:#f8f8f8;"></div>
<div style="position:absolute;left:129px;top:431px;width:128px;height:20px;background:#f3f3f3;"></div>
<div style="position:absolute;left:257px;top:431px;width:130px;height:20px;background:#ffffff;"></div>
<div style="position:absolute;left:387px;top:431px;width:913px;height:20px;background:#eeeeee;"></div>
<div style="position:absolute;left:257px;top:431px;width:1px;height:20px;background:#d4d4d4;"></div>
<div style="position:absolute;left:387px;top:431px;width:1px;height:20px;background:#d9d9d9;"></div>
<div style="position:absolute;left:474px;top:431px;width:1px;height:20px;background:#d9d9d9;"></div>
<div style="position:absolute;left:561px;top:431px;width:1px;height:20px;background:#d9d9d9;"></div>
<div style="position:absolute;left:648px;top:431px;width:1px;height:20px;background:#d9d9d9;"></div>
<div style="position:absolute;left:778px;top:431px;width:1px;height:20px;background:#d9d9d9;"></div>
<div style="position:absolute;left:865px;top:431px;width:1px;height:20px;background:#d9d9d9;"></div>
<div style="position:absolute;left:952px;top:431px;width:1px;height:20px;background:#d9d9d9;"></div>
<div style="position:absolute;left:1039px;top:431px;width:1px;height:20px;background:#d9d9d9;"></div>
<div style="position:absolute;left:1126px;top:431px;width:1px;height:20px;background:#d9d9d9;"></div>
<div style="position:absolute;left:1213px;top:431px;width:1px;height:20px;background:#d9d9d9;"></div>
<div style="position:absolute;left:1300px;top:431px;width:1px;height:20px;background:#d9d9d9;"></div>
<div style="position:absolute;left:1039px;top:431px;width:87px;height:20px;background:#519563;"></div>
<div style="position:absolute;left:1126px;top:431px;width:86px;height:20px;background:#519563;"></div>
<div style="position:absolute;left:1126px;top:431px;width:1px;height:20px;background:#3f7f52;"></div>
<svg style="position:absolute;left:109px;top:435px" width="17" height="11"><path d="M0,9.6 L7.5,1 L15,9.6 Z" fill="#1aa51a"/></svg>
<div style="position:absolute;left:132.5px;top:429.7px;height:20px;line-height:20px;font-size:11.2px;color:#111;font-weight:400;white-space:nowrap;">IT-Extern</div>
<div style="position:absolute;right:1345.8px;top:429.7px;height:20px;line-height:20px;font-size:11.5px;color:#111;font-weight:400;white-space:nowrap;text-align:right;letter-spacing:-0.35px;">3 PT</div>
<div style="position:absolute;right:1258.8px;top:429.7px;height:20px;line-height:20px;font-size:11.5px;color:#333;font-weight:400;white-space:nowrap;text-align:right;letter-spacing:-0.35px;">3 PT</div>
<div style="position:absolute;right:1171.8px;top:429.7px;height:20px;line-height:20px;font-size:11.5px;color:#333;font-weight:400;white-space:nowrap;text-align:right;letter-spacing:-0.35px;">3 PT</div>
<div style="position:absolute;right:1084.8px;top:429.7px;height:20px;line-height:20px;font-size:11.5px;color:#333;font-weight:400;white-space:nowrap;text-align:right;letter-spacing:-0.35px;">3 PT</div>
<div style="position:absolute;right:954.8px;top:429.7px;height:20px;line-height:20px;font-size:11.5px;color:#333;font-weight:400;white-space:nowrap;text-align:right;letter-spacing:-0.35px;">3 PT</div>
<div style="position:absolute;right:867.8px;top:429.7px;height:20px;line-height:20px;font-size:11.5px;color:#333;font-weight:400;white-space:nowrap;text-align:right;letter-spacing:-0.35px;">3 PT</div>
<div style="position:absolute;right:780.8px;top:429.7px;height:20px;line-height:20px;font-size:11.5px;color:#333;font-weight:400;white-space:nowrap;text-align:right;letter-spacing:-0.35px;">3 PT</div>
<div style="position:absolute;right:693.8000000000002px;top:429.7px;height:20px;line-height:20px;font-size:11.5px;color:#333;font-weight:400;white-space:nowrap;text-align:right;letter-spacing:-0.35px;">5 PT</div>
<div style="position:absolute;right:520.8px;top:429.7px;height:20px;line-height:20px;font-size:11.5px;color:#f0f8f0;font-weight:400;white-space:nowrap;text-align:right;letter-spacing:-0.2px;">-4.17 %</div>
<div style="position:absolute;right:432.8000000000002px;top:429.7px;height:20px;line-height:20px;font-size:11.5px;color:#333;font-weight:400;white-space:nowrap;text-align:right;letter-spacing:-0.35px;">236 PT</div>
<div style="position:absolute;left:257px;top:451px;width:1043px;height:1px;background:#cdcdcd;"></div>
<div style="position:absolute;left:1039px;top:406px;width:87px;height:1px;background:#3f8a57;"></div>
<div style="position:absolute;left:1039px;top:407px;width:87px;height:1px;background:#9ccaa6;"></div>
<div style="position:absolute;left:1039px;top:408px;width:87px;height:1px;background:#3f8a57;"></div>
<div style="position:absolute;left:1039px;top:429px;width:87px;height:1px;background:#9ccaa6;"></div>
<div style="position:absolute;left:1039px;top:430px;width:87px;height:1px;background:#519563;"></div>
<div style="position:absolute;left:1126px;top:406px;width:87px;height:1px;background:#3f8a57;"></div>
<div style="position:absolute;left:1126px;top:407px;width:87px;height:1px;background:#9ccaa6;"></div>
<div style="position:absolute;left:1126px;top:408px;width:86px;height:1px;background:#3f8a57;"></div>
<div style="position:absolute;left:1126px;top:429px;width:86px;height:1px;background:#9ccaa6;"></div>
<div style="position:absolute;left:1126px;top:430px;width:86px;height:1px;background:#519563;"></div>
<div style="position:absolute;right:1348.5px;top:469.0px;height:20px;line-height:20px;font-size:11px;color:#111;font-weight:700;white-space:nowrap;text-align:right;">Nutzen</div>
<div style="position:absolute;right:1262.5px;top:469.0px;height:20px;line-height:20px;font-size:11px;color:#555;font-weight:400;white-space:nowrap;text-align:right;">Geplant</div>
<div style="position:absolute;right:1175.5px;top:469.0px;height:20px;line-height:20px;font-size:11px;color:#555;font-weight:400;white-space:nowrap;text-align:right;">Erreicht</div>
<div style="position:absolute;right:1088.5px;top:469.0px;height:20px;line-height:20px;font-size:11px;color:#555;font-weight:400;white-space:nowrap;text-align:right;">Resultierend</div>
<div style="position:absolute;right:958.5px;top:469.0px;height:20px;line-height:20px;font-size:11px;color:#555;font-weight:400;white-space:nowrap;text-align:right;">Abw. Budget</div>
<div style="position:absolute;right:871.5px;top:469.0px;height:20px;line-height:20px;font-size:11px;color:#111;font-weight:700;white-space:nowrap;text-align:right;">Erlöse</div>
<div style="position:absolute;right:784.5px;top:469.0px;height:20px;line-height:20px;font-size:11px;color:#555;font-weight:400;white-space:nowrap;text-align:right;">Ist</div>
<div style="position:absolute;right:697.5px;top:469.0px;height:20px;line-height:20px;font-size:11px;color:#555;font-weight:400;white-space:nowrap;text-align:right;">Rest</div>
<div style="position:absolute;right:610.5px;top:469.0px;height:20px;line-height:20px;font-size:11px;color:#555;font-weight:400;white-space:nowrap;text-align:right;">Gesamt</div>
<div style="position:absolute;right:523.5px;top:469.0px;height:20px;line-height:20px;font-size:11px;color:#555;font-weight:400;white-space:nowrap;text-align:right;">Abw. Budget</div>
<div style="position:absolute;left:116.4px;top:489.0px;height:20px;line-height:20px;font-size:10.6px;color:#111;font-weight:700;white-space:nowrap;">Nutzen + Erlöse</div>
<div style="position:absolute;right:1259.3px;top:489.0px;height:20px;line-height:20px;font-size:11px;color:#111;font-weight:400;white-space:nowrap;text-align:right;">440.000 €</div>
<div style="position:absolute;right:1085.3px;top:489.0px;height:20px;line-height:20px;font-size:11px;color:#111;font-weight:400;white-space:nowrap;text-align:right;">440.000 €</div>
<div style="position:absolute;right:955.3px;top:489.0px;height:20px;line-height:20px;font-size:11px;color:#111;font-weight:400;white-space:nowrap;text-align:right;">393.952 €</div>
<div style="position:absolute;right:520.3px;top:489.0px;height:20px;line-height:20px;font-size:11px;color:#111;font-weight:400;white-space:nowrap;text-align:right;">-46.048 €</div>
<svg style="position:absolute;left:59px;top:526px" width="12" height="10"><path d="M2.5,3 L6,6.5 L9.5,3" stroke="#9a9a9a" stroke-width="1.6" fill="none"/></svg>
<div style="position:absolute;left:99px;top:524.0px;height:20px;line-height:20px;font-size:14.2px;color:#1f3d55;font-weight:400;white-space:nowrap;">Zeitraum</div>
<div style="position:absolute;left:162.5px;top:524.0px;height:20px;line-height:20px;font-size:14px;color:#1f3d55;font-weight:400;white-space:nowrap;">2</div>
<svg style="position:absolute;left:169px;top:530px" width="12" height="9"><path d="M1.6,2.4 L9.8,2.4 L5.7,6.8 Z" fill="#6d88a8" stroke="#000" stroke-width="1" stroke-linejoin="miter"/></svg>
<div style="position:absolute;left:228.5px;top:524.0px;height:20px;line-height:20px;font-size:14.6px;color:#1f3d55;font-weight:400;white-space:nowrap;">2019</div>
<svg style="position:absolute;left:371px;top:521px" width="27" height="26"><rect x="1.7" y="1.7" width="22.8" height="21.8" fill="#fff" stroke="#000" stroke-width="1.3"/><path d="M5.5,12.5 L10,17 L19.5,7.5" stroke="#000" stroke-width="1.4" fill="none"/></svg>
<svg style="position:absolute;left:419px;top:521px" width="27" height="26"><rect x="1.7" y="1.7" width="22.8" height="21.8" fill="#fff" stroke="#000" stroke-width="1.3"/><path d="M5.5,5.5 L20.5,20 M20.5,5.5 L5.5,20" stroke="#000" stroke-width="2.2" fill="none"/></svg>
<div style="position:absolute;left:812.8px;top:524.0px;height:20px;line-height:20px;font-size:14px;color:#2a5e80;font-weight:400;white-space:nowrap;">Erledigt</div>
<div style="position:absolute;left:883px;top:524.0px;height:20px;line-height:20px;font-size:14px;color:#2a5e80;font-weight:400;white-space:nowrap;">1</div>
<svg style="position:absolute;left:889px;top:530px" width="12" height="9"><path d="M1.5,6.3 L9.7,6.3 L5.6,2.3 Z" fill="#6a90b8" stroke="#000" stroke-width="1"/></svg>
<div style="position:absolute;left:907px;top:529px;width:11px;height:11px;border:1.3px solid #666;background:#fff;"></div>
<div style="position:absolute;left:988.8px;top:524.0px;height:20px;line-height:20px;font-size:13.6px;color:#2a5e80;font-weight:400;white-space:nowrap;">Freigegeben</div>
<div style="position:absolute;left:1102px;top:529px;width:11px;height:11px;border:1px solid #c4c4c4;background:#fff;"></div>
<div style="position:absolute;right:1348.5px;top:546.0px;height:20px;line-height:20px;font-size:11.4px;color:#555;font-weight:400;white-space:nowrap;text-align:right;">Portfoliobudget</div>
<div style="position:absolute;right:1261.5px;top:546.0px;height:20px;line-height:20px;font-size:11.4px;color:#555;font-weight:400;white-space:nowrap;text-align:right;">Relevant</div>
<div style="position:absolute;right:1174.5px;top:546.0px;height:20px;line-height:20px;font-size:11.4px;color:#555;font-weight:400;white-space:nowrap;text-align:right;">Genehmigt</div>
<div style="position:absolute;right:1087.5px;top:546.0px;height:20px;line-height:20px;font-size:11.4px;color:#555;font-weight:400;white-space:nowrap;text-align:right;">Beantragt</div>
<div style="position:absolute;right:957.5px;top:546.0px;height:20px;line-height:20px;font-size:11.4px;color:#555;font-weight:400;white-space:nowrap;text-align:right;">Projektbudget</div>
<div style="position:absolute;right:870.5px;top:546.0px;height:20px;line-height:20px;font-size:11.4px;color:#555;font-weight:400;white-space:nowrap;text-align:right;">Baseline</div>
<div style="position:absolute;right:783.5px;top:546.0px;height:20px;line-height:20px;font-size:11.4px;color:#555;font-weight:400;white-space:nowrap;text-align:right;">Kosten SB</div>
<div style="position:absolute;right:696.5px;top:546.0px;height:20px;line-height:20px;font-size:11.4px;color:#555;font-weight:400;white-space:nowrap;text-align:right;">Kosten</div>
<div style="position:absolute;right:609.5px;top:546.0px;height:20px;line-height:20px;font-size:11.4px;color:#555;font-weight:400;white-space:nowrap;text-align:right;">Abweichung</div>
<div style="position:absolute;right:522.5px;top:546.0px;height:20px;line-height:20px;font-size:11.4px;color:#555;font-weight:400;white-space:nowrap;text-align:right;">%-Abw.</div>
<div style="position:absolute;right:435.5px;top:546.0px;height:20px;line-height:20px;font-size:11.4px;color:#555;font-weight:400;white-space:nowrap;text-align:right;">Obligo</div>
<div style="position:absolute;left:257px;top:566px;width:1043px;height:20px;background:#efefef;"></div>
<svg style="position:absolute;left:93px;top:571px" width="17" height="11"><path d="M0,9.6 L7.5,1 L15,9.6 Z" fill="#1aa51a"/></svg>
<div style="position:absolute;left:116px;top:566.2px;height:20px;line-height:20px;font-size:10.8px;color:#2a78a6;font-weight:700;white-space:nowrap;">Kosten</div>
<div style="position:absolute;left:1039px;top:566px;width:87px;height:20px;background:#3f8a57;"></div>
<div style="position:absolute;left:1126px;top:566px;width:87px;height:20px;background:#3f8a57;"></div>
<div style="position:absolute;right:1345.5px;top:565.0px;height:20px;line-height:20px;font-size:11.2px;color:#333;font-weight:700;white-space:nowrap;text-align:right;">1.130.000 €</div>
<div style="position:absolute;right:1258.5px;top:565.0px;height:20px;line-height:20px;font-size:11.2px;color:#333;font-weight:700;white-space:nowrap;text-align:right;">1.125.979 €</div>
<div style="position:absolute;right:1171.5px;top:565.0px;height:20px;line-height:20px;font-size:11.2px;color:#333;font-weight:700;white-space:nowrap;text-align:right;">677.219 €</div>
<div style="position:absolute;right:1084.5px;top:565.0px;height:20px;line-height:20px;font-size:11.2px;color:#333;font-weight:700;white-space:nowrap;text-align:right;">1.125.979 €</div>
<div style="position:absolute;right:954.5px;top:565.0px;height:20px;line-height:20px;font-size:11.2px;color:#333;font-weight:700;white-space:nowrap;text-align:right;">913.999 €</div>
<div style="position:absolute;right:867.5px;top:565.0px;height:20px;line-height:20px;font-size:11.2px;color:#333;font-weight:700;white-space:nowrap;text-align:right;">276.237 €</div>
<div style="position:absolute;right:780.5px;top:565.0px;height:20px;line-height:20px;font-size:11.2px;color:#333;font-weight:700;white-space:nowrap;text-align:right;">291.237 €</div>
<div style="position:absolute;right:693.5px;top:565.0px;height:20px;line-height:20px;font-size:11.2px;color:#333;font-weight:700;white-space:nowrap;text-align:right;">1.138.649 €</div>
<div style="position:absolute;right:606.5px;top:565.5px;height:20px;line-height:20px;font-size:11.5px;color:#f0f8f0;font-weight:400;white-space:nowrap;text-align:right;letter-spacing:-0.2px;">-4.021 €</div>
<div style="position:absolute;right:520.5px;top:565.5px;height:20px;line-height:20px;font-size:11.5px;color:#f0f8f0;font-weight:400;white-space:nowrap;text-align:right;letter-spacing:-0.2px;">-0.36 %</div>
<div style="position:absolute;left:90px;top:587px;width:1210px;height:1px;background:#a9a9a9;"></div>
<div style="position:absolute;left:90px;top:588px;width:1210px;height:1px;background:#dcdcdc;"></div>
<div style="position:absolute;left:257px;top:589px;width:130px;height:20px;background:#ffffff;"></div>
<div style="position:absolute;left:387px;top:589px;width:913px;height:20px;background:#eeeeee;"></div>
<div style="position:absolute;left:257px;top:589px;width:1px;height:20px;background:#d4d4d4;"></div>
<div style="position:absolute;left:387px;top:589px;width:1px;height:20px;background:#d9d9d9;"></div>
<div style="position:absolute;left:474px;top:589px;width:1px;height:20px;background:#d9d9d9;"></div>
<div style="position:absolute;left:561px;top:589px;width:1px;height:20px;background:#d9d9d9;"></div>
<div style="position:absolute;left:648px;top:589px;width:1px;height:20px;background:#d9d9d9;"></div>
<div style="position:absolute;left:778px;top:589px;width:1px;height:20px;background:#d9d9d9;"></div>
<div style="position:absolute;left:865px;top:589px;width:1px;height:20px;background:#d9d9d9;"></div>
<div style="position:absolute;left:952px;top:589px;width:1px;height:20px;background:#d9d9d9;"></div>
<div style="position:absolute;left:1039px;top:589px;width:1px;height:20px;background:#d9d9d9;"></div>
<div style="position:absolute;left:1126px;top:589px;width:1px;height:20px;background:#d9d9d9;"></div>
<div style="position:absolute;left:1213px;top:589px;width:1px;height:20px;background:#d9d9d9;"></div>
<div style="position:absolute;left:1300px;top:589px;width:1px;height:20px;background:#d9d9d9;"></div>
<div style="position:absolute;left:1039px;top:589px;width:87px;height:20px;background:#3f8a57;"></div>
<div style="position:absolute;left:1126px;top:589px;width:86px;height:20px;background:#3f8a57;"></div>
<svg style="position:absolute;left:109px;top:593px" width="17" height="11"><path d="M0,9.6 L7.5,1 L15,9.6 Z" fill="#1aa51a"/></svg>
<div style="position:absolute;left:132.5px;top:587.7px;height:20px;line-height:20px;font-size:11.2px;color:#111;font-weight:400;white-space:nowrap;">Interne Kosten</div>
<div style="position:absolute;right:1345.8px;top:587.7px;height:20px;line-height:20px;font-size:11.5px;color:#111;font-weight:400;white-space:nowrap;text-align:right;letter-spacing:-0.35px;">600.000 €</div>
<div style="position:absolute;right:1258.8px;top:587.7px;height:20px;line-height:20px;font-size:11.5px;color:#333;font-weight:400;white-space:nowrap;text-align:right;letter-spacing:-0.35px;">587.239 €</div>
<div style="position:absolute;right:1171.8px;top:587.7px;height:20px;line-height:20px;font-size:11.5px;color:#333;font-weight:400;white-space:nowrap;text-align:right;letter-spacing:-0.35px;">415.099 €</div>
<div style="position:absolute;right:1084.8px;top:587.7px;height:20px;line-height:20px;font-size:11.5px;color:#333;font-weight:400;white-space:nowrap;text-align:right;letter-spacing:-0.35px;">587.239 €</div>
<div style="position:absolute;right:954.8px;top:587.7px;height:20px;line-height:20px;font-size:11.5px;color:#333;font-weight:400;white-space:nowrap;text-align:right;letter-spacing:-0.35px;">520.259 €</div>
<div style="position:absolute;right:867.8px;top:587.7px;height:20px;line-height:20px;font-size:11.5px;color:#333;font-weight:400;white-space:nowrap;text-align:right;letter-spacing:-0.35px;">93.585 €</div>
<div style="position:absolute;right:780.8px;top:587.7px;height:20px;line-height:20px;font-size:11.5px;color:#333;font-weight:400;white-space:nowrap;text-align:right;letter-spacing:-0.35px;">93.585 €</div>
<div style="position:absolute;right:693.8000000000002px;top:587.7px;height:20px;line-height:20px;font-size:11.5px;color:#333;font-weight:400;white-space:nowrap;text-align:right;letter-spacing:-0.35px;">585.189 €</div>
<div style="position:absolute;right:606.5px;top:587.7px;height:20px;line-height:20px;font-size:11.5px;color:#f0f8f0;font-weight:400;white-space:nowrap;text-align:right;letter-spacing:-0.2px;">-12.761 €</div>
<div style="position:absolute;right:520.8px;top:587.7px;height:20px;line-height:20px;font-size:11.5px;color:#f0f8f0;font-weight:400;white-space:nowrap;text-align:right;letter-spacing:-0.2px;">-2.13 %</div>
<div style="position:absolute;left:106px;top:609px;width:1194px;height:1px;background:#a9a9a9;"></div>
<div style="position:absolute;left:106px;top:610px;width:1194px;height:1px;background:#dcdcdc;"></div>
<div style="position:absolute;left:106px;top:611px;width:23px;height:20px;background:#f8f8f8;"></div>
<div style="position:absolute;left:129px;top:611px;width:128px;height:20px;background:#f3f3f3;"></div>
<div style="position:absolute;left:257px;top:611px;width:130px;height:20px;background:#ffffff;"></div>
<div style="position:absolute;left:387px;top:611px;width:913px;height:20px;background:#eeeeee;"></div>
<div style="position:absolute;left:257px;top:611px;width:1px;height:20px;background:#d4d4d4;"></div>
<div style="position:absolute;left:387px;top:611px;width:1px;height:20px;background:#d9d9d9;"></div>
<div style="position:absolute;left:474px;top:611px;width:1px;height:20px;background:#d9d9d9;"></div>
<div style="position:absolute;left:561px;top:611px;width:1px;height:20px;background:#d9d9d9;"></div>
<div style="position:absolute;left:648px;top:611px;width:1px;height:20px;background:#d9d9d9;"></div>
<div style="position:absolute;left:778px;top:611px;width:1px;height:20px;background:#d9d9d9;"></div>
<div style="position:absolute;left:865px;top:611px;width:1px;height:20px;background:#d9d9d9;"></div>
<div style="position:absolute;left:952px;top:611px;width:1px;height:20px;background:#d9d9d9;"></div>
<div style="position:absolute;left:1039px;top:611px;width:1px;height:20px;background:#d9d9d9;"></div>
<div style="position:absolute;left:1126px;top:611px;width:1px;height:20px;background:#d9d9d9;"></div>
<div style="position:absolute;left:1213px;top:611px;width:1px;height:20px;background:#d9d9d9;"></div>
<div style="position:absolute;left:1300px;top:611px;width:1px;height:20px;background:#d9d9d9;"></div>
<div style="position:absolute;left:1039px;top:611px;width:87px;height:20px;background:#ea1616;"></div>
<div style="position:absolute;left:1126px;top:611px;width:86px;height:20px;background:#ea1616;"></div>
<div style="position:absolute;left:1126px;top:611px;width:1px;height:20px;background:#c01010;"></div>
<svg style="position:absolute;left:109px;top:615px" width="17" height="10"><path d="M0.8,1 L15.2,1 L8,9.2 Z" fill="#e02010"/></svg>
<div style="position:absolute;left:132.5px;top:609.7px;height:20px;line-height:20px;font-size:11.2px;color:#111;font-weight:400;white-space:nowrap;">Externe Kosten</div>
<div style="position:absolute;right:1345.8px;top:609.7px;height:20px;line-height:20px;font-size:11.5px;color:#111;font-weight:400;white-space:nowrap;text-align:right;letter-spacing:-0.35px;">100.000 €</div>
<div style="position:absolute;right:1258.8px;top:609.7px;height:20px;line-height:20px;font-size:11.5px;color:#333;font-weight:400;white-space:nowrap;text-align:right;letter-spacing:-0.35px;">116.740 €</div>
<div style="position:absolute;right:1171.8px;top:609.7px;height:20px;line-height:20px;font-size:11.5px;color:#333;font-weight:400;white-space:nowrap;text-align:right;letter-spacing:-0.35px;">115.120 €</div>
<div style="position:absolute;right:1084.8px;top:609.7px;height:20px;line-height:20px;font-size:11.5px;color:#333;font-weight:400;white-space:nowrap;text-align:right;letter-spacing:-0.35px;">116.740 €</div>
<div style="position:absolute;right:954.8px;top:609.7px;height:20px;line-height:20px;font-size:11.5px;color:#333;font-weight:400;white-space:nowrap;text-align:right;letter-spacing:-0.35px;">116.740 €</div>
<div style="position:absolute;right:867.8px;top:609.7px;height:20px;line-height:20px;font-size:11.5px;color:#333;font-weight:400;white-space:nowrap;text-align:right;letter-spacing:-0.35px;">77.652 €</div>
<div style="position:absolute;right:780.8px;top:609.7px;height:20px;line-height:20px;font-size:11.5px;color:#333;font-weight:400;white-space:nowrap;text-align:right;letter-spacing:-0.35px;">77.652 €</div>
<div style="position:absolute;right:693.8000000000002px;top:609.7px;height:20px;line-height:20px;font-size:11.5px;color:#333;font-weight:400;white-space:nowrap;text-align:right;letter-spacing:-0.35px;">136.460 €</div>
<div style="position:absolute;right:606.5px;top:609.7px;height:20px;line-height:20px;font-size:11.5px;color:#f0f8f0;font-weight:400;white-space:nowrap;text-align:right;letter-spacing:-0.2px;">16.740 €</div>
<div style="position:absolute;right:520.8px;top:609.7px;height:20px;line-height:20px;font-size:11.5px;color:#f0f8f0;font-weight:400;white-space:nowrap;text-align:right;letter-spacing:-0.2px;">16.74 %</div>
<div style="position:absolute;left:106px;top:631px;width:1194px;height:1px;background:#a9a9a9;"></div>
<div style="position:absolute;left:106px;top:632px;width:1194px;height:1px;background:#dcdcdc;"></div>
<div style="position:absolute;left:257px;top:633px;width:130px;height:20px;background:#ffffff;"></div>
<div style="position:absolute;left:387px;top:633px;width:913px;height:20px;background:#eeeeee;"></div>
<div style="position:absolute;left:257px;top:633px;width:1px;height:20px;background:#d4d4d4;"></div>
<div style="position:absolute;left:387px;top:633px;width:1px;height:20px;background:#d9d9d9;"></div>
<div style="position:absolute;left:474px;top:633px;width:1px;height:20px;background:#d9d9d9;"></div>
<div style="position:absolute;left:561px;top:633px;width:1px;height:20px;background:#d9d9d9;"></div>
<div style="position:absolute;left:648px;top:633px;width:1px;height:20px;background:#d9d9d9;"></div>
<div style="position:absolute;left:778px;top:633px;width:1px;height:20px;background:#d9d9d9;"></div>
<div style="position:absolute;left:865px;top:633px;width:1px;height:20px;background:#d9d9d9;"></div>
<div style="position:absolute;left:952px;top:633px;width:1px;height:20px;background:#d9d9d9;"></div>
<div style="position:absolute;left:1039px;top:633px;width:1px;height:20px;background:#d9d9d9;"></div>
<div style="position:absolute;left:1126px;top:633px;width:1px;height:20px;background:#d9d9d9;"></div>
<div style="position:absolute;left:1213px;top:633px;width:1px;height:20px;background:#d9d9d9;"></div>
<div style="position:absolute;left:1300px;top:633px;width:1px;height:20px;background:#d9d9d9;"></div>
<div style="position:absolute;left:1039px;top:633px;width:87px;height:20px;background:#3f8a57;"></div>
<div style="position:absolute;left:1126px;top:633px;width:86px;height:20px;background:#3f8a57;"></div>
<svg style="position:absolute;left:109px;top:637px" width="17" height="11"><path d="M0,9.6 L7.5,1 L15,9.6 Z" fill="#1aa51a"/></svg>
<div style="position:absolute;left:132.5px;top:631.7px;height:20px;line-height:20px;font-size:11.2px;color:#111;font-weight:400;white-space:nowrap;">Sachkosten</div>
<div style="position:absolute;right:1345.8px;top:631.7px;height:20px;line-height:20px;font-size:11.5px;color:#111;font-weight:400;white-space:nowrap;text-align:right;letter-spacing:-0.35px;">130.000 €</div>
<div style="position:absolute;right:1258.8px;top:631.7px;height:20px;line-height:20px;font-size:11.5px;color:#333;font-weight:400;white-space:nowrap;text-align:right;letter-spacing:-0.35px;">127.000 €</div>
<div style="position:absolute;right:1171.8px;top:631.7px;height:20px;line-height:20px;font-size:11.5px;color:#333;font-weight:400;white-space:nowrap;text-align:right;letter-spacing:-0.35px;">12.000 €</div>
<div style="position:absolute;right:1084.8px;top:631.7px;height:20px;line-height:20px;font-size:11.5px;color:#333;font-weight:400;white-space:nowrap;text-align:right;letter-spacing:-0.35px;">127.000 €</div>
<div style="position:absolute;right:954.8px;top:631.7px;height:20px;line-height:20px;font-size:11.5px;color:#333;font-weight:400;white-space:nowrap;text-align:right;letter-spacing:-0.35px;">87.000 €</div>
<div style="position:absolute;right:693.8000000000002px;top:631.7px;height:20px;line-height:20px;font-size:11.5px;color:#333;font-weight:400;white-space:nowrap;text-align:right;letter-spacing:-0.35px;">107.000 €</div>
<div style="position:absolute;right:606.5px;top:631.7px;height:20px;line-height:20px;font-size:11.5px;color:#f0f8f0;font-weight:400;white-space:nowrap;text-align:right;letter-spacing:-0.2px;">-3.000 €</div>
<div style="position:absolute;right:520.8px;top:631.7px;height:20px;line-height:20px;font-size:11.5px;color:#f0f8f0;font-weight:400;white-space:nowrap;text-align:right;letter-spacing:-0.2px;">-2.31 %</div>
<div style="position:absolute;left:106px;top:653px;width:1194px;height:1px;background:#a9a9a9;"></div>
<div style="position:absolute;left:106px;top:654px;width:1194px;height:1px;background:#dcdcdc;"></div>
<div style="position:absolute;left:106px;top:655px;width:23px;height:20px;background:#f8f8f8;"></div>
<div style="position:absolute;left:129px;top:655px;width:128px;height:20px;background:#f3f3f3;"></div>
<div style="position:absolute;left:257px;top:655px;width:130px;height:20px;background:#ffffff;"></div>
<div style="position:absolute;left:387px;top:655px;width:913px;height:20px;background:#eeeeee;"></div>
<div style="position:absolute;left:257px;top:655px;width:1px;height:20px;background:#d4d4d4;"></div>
<div style="position:absolute;left:387px;top:655px;width:1px;height:20px;background:#d9d9d9;"></div>
<div style="position:absolute;left:474px;top:655px;width:1px;height:20px;background:#d9d9d9;"></div>
<div style="position:absolute;left:561px;top:655px;width:1px;height:20px;background:#d9d9d9;"></div>
<div style="position:absolute;left:648px;top:655px;width:1px;height:20px;background:#d9d9d9;"></div>
<div style="position:absolute;left:778px;top:655px;width:1px;height:20px;background:#d9d9d9;"></div>
<div style="position:absolute;left:865px;top:655px;width:1px;height:20px;background:#d9d9d9;"></div>
<div style="position:absolute;left:952px;top:655px;width:1px;height:20px;background:#d9d9d9;"></div>
<div style="position:absolute;left:1039px;top:655px;width:1px;height:20px;background:#d9d9d9;"></div>
<div style="position:absolute;left:1126px;top:655px;width:1px;height:20px;background:#d9d9d9;"></div>
<div style="position:absolute;left:1213px;top:655px;width:1px;height:20px;background:#d9d9d9;"></div>
<div style="position:absolute;left:1300px;top:655px;width:1px;height:20px;background:#d9d9d9;"></div>
<svg style="position:absolute;left:109px;top:659px" width="17" height="11"><path d="M0,9.6 L7.5,1 L15,9.6 Z" fill="#1aa51a"/></svg>
<div style="position:absolute;left:132.5px;top:653.7px;height:20px;line-height:20px;font-size:11.2px;color:#111;font-weight:400;white-space:nowrap;">Investitionen</div>
<div style="position:absolute;right:1345.8px;top:653.7px;height:20px;line-height:20px;font-size:11.5px;color:#111;font-weight:400;white-space:nowrap;text-align:right;letter-spacing:-0.35px;">270.000 €</div>
<div style="position:absolute;right:1258.8px;top:653.7px;height:20px;line-height:20px;font-size:11.5px;color:#333;font-weight:400;white-space:nowrap;text-align:right;letter-spacing:-0.35px;">270.000 €</div>
<div style="position:absolute;right:1171.8px;top:653.7px;height:20px;line-height:20px;font-size:11.5px;color:#333;font-weight:400;white-space:nowrap;text-align:right;letter-spacing:-0.35px;">110.000 €</div>
<div style="position:absolute;right:1084.8px;top:653.7px;height:20px;line-height:20px;font-size:11.5px;color:#333;font-weight:400;white-space:nowrap;text-align:right;letter-spacing:-0.35px;">270.000 €</div>
<div style="position:absolute;right:954.8px;top:653.7px;height:20px;line-height:20px;font-size:11.5px;color:#333;font-weight:400;white-space:nowrap;text-align:right;letter-spacing:-0.35px;">165.000 €</div>
<div style="position:absolute;right:867.8px;top:653.7px;height:20px;line-height:20px;font-size:11.5px;color:#333;font-weight:400;white-space:nowrap;text-align:right;letter-spacing:-0.35px;">80.000 €</div>
<div style="position:absolute;right:780.8px;top:653.7px;height:20px;line-height:20px;font-size:11.5px;color:#333;font-weight:400;white-space:nowrap;text-align:right;letter-spacing:-0.35px;">90.000 €</div>
<div style="position:absolute;right:693.8000000000002px;top:653.7px;height:20px;line-height:20px;font-size:11.5px;color:#333;font-weight:400;white-space:nowrap;text-align:right;letter-spacing:-0.35px;">280.000 €</div>
<div style="position:absolute;left:106px;top:675px;width:1194px;height:1px;background:#a9a9a9;"></div>
<div style="position:absolute;left:106px;top:676px;width:1194px;height:1px;background:#dcdcdc;"></div>
<div style="position:absolute;left:257px;top:677px;width:130px;height:20px;background:#ffffff;"></div>
<div style="position:absolute;left:387px;top:677px;width:913px;height:20px;background:#eeeeee;"></div>
<div style="position:absolute;left:257px;top:677px;width:1px;height:20px;background:#d4d4d4;"></div>
<div style="position:absolute;left:387px;top:677px;width:1px;height:20px;background:#d9d9d9;"></div>
<div style="position:absolute;left:474px;top:677px;width:1px;height:20px;background:#d9d9d9;"></div>
<div style="position:absolute;left:561px;top:677px;width:1px;height:20px;background:#d9d9d9;"></div>
<div style="position:absolute;left:648px;top:677px;width:1px;height:20px;background:#d9d9d9;"></div>
<div style="position:absolute;left:778px;top:677px;width:1px;height:20px;background:#d9d9d9;"></div>
<div style="position:absolute;left:865px;top:677px;width:1px;height:20px;background:#d9d9d9;"></div>
<div style="position:absolute;left:952px;top:677px;width:1px;height:20px;background:#d9d9d9;"></div>
<div style="position:absolute;left:1039px;top:677px;width:1px;height:20px;background:#d9d9d9;"></div>
<div style="position:absolute;left:1126px;top:677px;width:1px;height:20px;background:#d9d9d9;"></div>
<div style="position:absolute;left:1213px;top:677px;width:1px;height:20px;background:#d9d9d9;"></div>
<div style="position:absolute;left:1300px;top:677px;width:1px;height:20px;background:#d9d9d9;"></div>
<div style="position:absolute;left:1039px;top:677px;width:87px;height:20px;background:#3f8a57;"></div>
<div style="position:absolute;left:1126px;top:677px;width:86px;height:20px;background:#3f8a57;"></div>
<svg style="position:absolute;left:109px;top:681px" width="17" height="11"><path d="M0,9.6 L7.5,1 L15,9.6 Z" fill="#1aa51a"/></svg>
<div style="position:absolute;left:132.5px;top:675.7px;height:20px;line-height:20px;font-size:11.2px;color:#111;font-weight:400;white-space:nowrap;">Sonstige</div>
<div style="position:absolute;right:1345.8px;top:675.7px;height:20px;line-height:20px;font-size:11.5px;color:#111;font-weight:400;white-space:nowrap;text-align:right;letter-spacing:-0.35px;">30.000 €</div>
<div style="position:absolute;right:1258.8px;top:675.7px;height:20px;line-height:20px;font-size:11.5px;color:#333;font-weight:400;white-space:nowrap;text-align:right;letter-spacing:-0.35px;">25.000 €</div>
<div style="position:absolute;right:1171.8px;top:675.7px;height:20px;line-height:20px;font-size:11.5px;color:#333;font-weight:400;white-space:nowrap;text-align:right;letter-spacing:-0.35px;">25.000 €</div>
<div style="position:absolute;right:1084.8px;top:675.7px;height:20px;line-height:20px;font-size:11.5px;color:#333;font-weight:400;white-space:nowrap;text-align:right;letter-spacing:-0.35px;">25.000 €</div>
<div style="position:absolute;right:954.8px;top:675.7px;height:20px;line-height:20px;font-size:11.5px;color:#333;font-weight:400;white-space:nowrap;text-align:right;letter-spacing:-0.35px;">25.000 €</div>
<div style="position:absolute;right:867.8px;top:675.7px;height:20px;line-height:20px;font-size:11.5px;color:#333;font-weight:400;white-space:nowrap;text-align:right;letter-spacing:-0.35px;">25.000 €</div>
<div style="position:absolute;right:780.8px;top:675.7px;height:20px;line-height:20px;font-size:11.5px;color:#333;font-weight:400;white-space:nowrap;text-align:right;letter-spacing:-0.35px;">30.000 €</div>
<div style="position:absolute;right:693.8000000000002px;top:675.7px;height:20px;line-height:20px;font-size:11.5px;color:#333;font-weight:400;white-space:nowrap;text-align:right;letter-spacing:-0.35px;">30.000 €</div>
<div style="position:absolute;right:606.5px;top:675.7px;height:20px;line-height:20px;font-size:11.5px;color:#f0f8f0;font-weight:400;white-space:nowrap;text-align:right;letter-spacing:-0.2px;">-5.000 €</div>
<div style="position:absolute;right:520.8px;top:675.7px;height:20px;line-height:20px;font-size:11.5px;color:#f0f8f0;font-weight:400;white-space:nowrap;text-align:right;letter-spacing:-0.2px;">-16.67 %</div>
<div style="position:absolute;left:257px;top:697px;width:1043px;height:1px;background:#cdcdcd;"></div>
<div style="position:absolute;left:1039px;top:586px;width:87px;height:1px;background:#3f8a57;"></div>
<div style="position:absolute;left:1039px;top:587px;width:87px;height:1px;background:#9ccaa6;"></div>
<div style="position:absolute;left:1039px;top:588px;width:87px;height:1px;background:#3f8a57;"></div>
<div style="position:absolute;left:1039px;top:609px;width:87px;height:1px;background:#f0a090;"></div>
<div style="position:absolute;left:1039px;top:610px;width:87px;height:1px;background:#ea1616;"></div>
<div style="position:absolute;left:1039px;top:631px;width:87px;height:1px;background:#f0a090;"></div>
<div style="position:absolute;left:1039px;top:632px;width:87px;height:1px;background:#3f8a57;"></div>
<div style="position:absolute;left:1039px;top:676px;width:87px;height:1px;background:#3f8a57;"></div>
<div style="position:absolute;left:1126px;top:586px;width:87px;height:1px;background:#3f8a57;"></div>
<div style="position:absolute;left:1126px;top:587px;width:87px;height:1px;background:#9ccaa6;"></div>
<div style="position:absolute;left:1126px;top:588px;width:86px;height:1px;background:#3f8a57;"></div>
<div style="position:absolute;left:1126px;top:609px;width:86px;height:1px;background:#f0a090;"></div>
<div style="position:absolute;left:1126px;top:610px;width:86px;height:1px;background:#ea1616;"></div>
<div style="position:absolute;left:1126px;top:631px;width:86px;height:1px;background:#f0a090;"></div>
<div style="position:absolute;left:1126px;top:632px;width:86px;height:1px;background:#3f8a57;"></div>
<div style="position:absolute;left:1126px;top:676px;width:86px;height:1px;background:#3f8a57;"></div>
<div style="position:absolute;right:1348.5px;top:700.0px;height:20px;line-height:20px;font-size:11.4px;color:#555;font-weight:400;white-space:nowrap;text-align:right;">Portfoliobudget</div>
<div style="position:absolute;right:1261.5px;top:700.0px;height:20px;line-height:20px;font-size:11.4px;color:#555;font-weight:400;white-space:nowrap;text-align:right;">Relevant</div>
<div style="position:absolute;right:1174.5px;top:700.0px;height:20px;line-height:20px;font-size:11.4px;color:#555;font-weight:400;white-space:nowrap;text-align:right;">Genehmigt</div>
<div style="position:absolute;right:1087.5px;top:700.0px;height:20px;line-height:20px;font-size:11.4px;color:#555;font-weight:400;white-space:nowrap;text-align:right;">Beantragt</div>
<div style="position:absolute;right:957.5px;top:700.0px;height:20px;line-height:20px;font-size:11.4px;color:#555;font-weight:400;white-space:nowrap;text-align:right;">Projektbudget</div>
<div style="position:absolute;right:870.5px;top:700.0px;height:20px;line-height:20px;font-size:11.4px;color:#555;font-weight:400;white-space:nowrap;text-align:right;">Baseline</div>
<div style="position:absolute;right:783.5px;top:700.0px;height:20px;line-height:20px;font-size:11.4px;color:#555;font-weight:400;white-space:nowrap;text-align:right;">Aufwand SB</div>
<div style="position:absolute;right:696.5px;top:700.0px;height:20px;line-height:20px;font-size:11.4px;color:#555;font-weight:400;white-space:nowrap;text-align:right;">Aufwand</div>
<div style="position:absolute;right:609.5px;top:700.0px;height:20px;line-height:20px;font-size:11.4px;color:#555;font-weight:400;white-space:nowrap;text-align:right;">Abweichung</div>
<div style="position:absolute;right:522.5px;top:700.0px;height:20px;line-height:20px;font-size:11.4px;color:#555;font-weight:400;white-space:nowrap;text-align:right;">%-Abw.</div>
<div style="position:absolute;right:435.5px;top:700.0px;height:20px;line-height:20px;font-size:11.4px;color:#555;font-weight:400;white-space:nowrap;text-align:right;">Verfügbarkeit</div>
<div style="position:absolute;left:257px;top:720px;width:1043px;height:20px;background:#efefef;"></div>
<svg style="position:absolute;left:93px;top:725px" width="17" height="11"><path d="M0,9.6 L7.5,1 L15,9.6 Z" fill="#1aa51a"/></svg>
<div style="position:absolute;left:116px;top:720.2px;height:20px;line-height:20px;font-size:10.8px;color:#2a78a6;font-weight:700;white-space:nowrap;">Aufwand</div>
<div style="position:absolute;left:1039px;top:720px;width:87px;height:20px;background:#3f8a57;"></div>
<div style="position:absolute;left:1126px;top:720px;width:87px;height:20px;background:#3f8a57;"></div>
<div style="position:absolute;right:1345.5px;top:719.0px;height:20px;line-height:20px;font-size:11.2px;color:#333;font-weight:700;white-space:nowrap;text-align:right;">835 PT</div>
<div style="position:absolute;right:1258.5px;top:719.0px;height:20px;line-height:20px;font-size:11.2px;color:#333;font-weight:700;white-space:nowrap;text-align:right;">832 PT</div>
<div style="position:absolute;right:1171.5px;top:719.0px;height:20px;line-height:20px;font-size:11.2px;color:#333;font-weight:700;white-space:nowrap;text-align:right;">683 PT</div>
<div style="position:absolute;right:1084.5px;top:719.0px;height:20px;line-height:20px;font-size:11.2px;color:#333;font-weight:700;white-space:nowrap;text-align:right;">832 PT</div>
<div style="position:absolute;right:954.5px;top:719.0px;height:20px;line-height:20px;font-size:11.2px;color:#333;font-weight:700;white-space:nowrap;text-align:right;">819 PT</div>
<div style="position:absolute;right:867.5px;top:719.0px;height:20px;line-height:20px;font-size:11.2px;color:#333;font-weight:700;white-space:nowrap;text-align:right;">183 PT</div>
<div style="position:absolute;right:780.5px;top:719.0px;height:20px;line-height:20px;font-size:11.2px;color:#333;font-weight:700;white-space:nowrap;text-align:right;">183 PT</div>
<div style="position:absolute;right:693.5px;top:719.0px;height:20px;line-height:20px;font-size:11.2px;color:#333;font-weight:700;white-space:nowrap;text-align:right;">829 PT</div>
<div style="position:absolute;right:606.5px;top:719.5px;height:20px;line-height:20px;font-size:11.5px;color:#f0f8f0;font-weight:400;white-space:nowrap;text-align:right;letter-spacing:-0.2px;">-3 PT</div>
<div style="position:absolute;right:520.5px;top:719.5px;height:20px;line-height:20px;font-size:11.5px;color:#f0f8f0;font-weight:400;white-space:nowrap;text-align:right;letter-spacing:-0.2px;">-0.37 %</div>
<div style="position:absolute;right:432.5px;top:719.0px;height:20px;line-height:20px;font-size:11.2px;color:#333;font-weight:700;white-space:nowrap;text-align:right;">1421 PT</div>
<div style="position:absolute;left:90px;top:741px;width:1210px;height:1px;background:#a9a9a9;"></div>
<div style="position:absolute;left:90px;top:742px;width:1210px;height:1px;background:#dcdcdc;"></div>
<div style="position:absolute;left:106px;top:743px;width:23px;height:20px;background:#f8f8f8;"></div>
<div style="position:absolute;left:129px;top:743px;width:128px;height:20px;background:#f3f3f3;"></div>
<div style="position:absolute;left:257px;top:743px;width:130px;height:20px;background:#ffffff;"></div>
<div style="position:absolute;left:387px;top:743px;width:913px;height:20px;background:#eeeeee;"></div>
<div style="position:absolute;left:257px;top:743px;width:1px;height:20px;background:#d4d4d4;"></div>
<div style="position:absolute;left:387px;top:743px;width:1px;height:20px;background:#d9d9d9;"></div>
<div style="position:absolute;left:474px;top:743px;width:1px;height:20px;background:#d9d9d9;"></div>
<div style="position:absolute;left:561px;top:743px;width:1px;height:20px;background:#d9d9d9;"></div>
<div style="position:absolute;left:648px;top:743px;width:1px;height:20px;background:#d9d9d9;"></div>
<div style="position:absolute;left:778px;top:743px;width:1px;height:20px;background:#d9d9d9;"></div>
<div style="position:absolute;left:865px;top:743px;width:1px;height:20px;background:#d9d9d9;"></div>
<div style="position:absolute;left:952px;top:743px;width:1px;height:20px;background:#d9d9d9;"></div>
<div style="position:absolute;left:1039px;top:743px;width:1px;height:20px;background:#d9d9d9;"></div>
<div style="position:absolute;left:1126px;top:743px;width:1px;height:20px;background:#d9d9d9;"></div>
<div style="position:absolute;left:1213px;top:743px;width:1px;height:20px;background:#d9d9d9;"></div>
<div style="position:absolute;left:1300px;top:743px;width:1px;height:20px;background:#d9d9d9;"></div>
<div style="position:absolute;left:1039px;top:743px;width:87px;height:20px;background:#519563;"></div>
<div style="position:absolute;left:1126px;top:743px;width:86px;height:20px;background:#519563;"></div>
<div style="position:absolute;left:1126px;top:743px;width:1px;height:20px;background:#3f7f52;"></div>
<svg style="position:absolute;left:109px;top:747px" width="17" height="11"><path d="M0,9.6 L7.5,1 L15,9.6 Z" fill="#1aa51a"/></svg>
<div style="position:absolute;left:132.5px;top:741.7px;height:20px;line-height:20px;font-size:11.2px;color:#111;font-weight:400;white-space:nowrap;">IT-Intern</div>
<div style="position:absolute;right:1345.8px;top:741.7px;height:20px;line-height:20px;font-size:11.5px;color:#111;font-weight:400;white-space:nowrap;text-align:right;letter-spacing:-0.35px;">735 PT</div>
<div style="position:absolute;right:1258.8px;top:741.7px;height:20px;line-height:20px;font-size:11.5px;color:#333;font-weight:400;white-space:nowrap;text-align:right;letter-spacing:-0.35px;">732 PT</div>
<div style="position:absolute;right:1171.8px;top:741.7px;height:20px;line-height:20px;font-size:11.5px;color:#333;font-weight:400;white-space:nowrap;text-align:right;letter-spacing:-0.35px;">586 PT</div>
<div style="position:absolute;right:1084.8px;top:741.7px;height:20px;line-height:20px;font-size:11.5px;color:#333;font-weight:400;white-space:nowrap;text-align:right;letter-spacing:-0.35px;">732 PT</div>
<div style="position:absolute;right:954.8px;top:741.7px;height:20px;line-height:20px;font-size:11.5px;color:#333;font-weight:400;white-space:nowrap;text-align:right;letter-spacing:-0.35px;">720 PT</div>
<div style="position:absolute;right:867.8px;top:741.7px;height:20px;line-height:20px;font-size:11.5px;color:#333;font-weight:400;white-space:nowrap;text-align:right;letter-spacing:-0.35px;">138 PT</div>
<div style="position:absolute;right:780.8px;top:741.7px;height:20px;line-height:20px;font-size:11.5px;color:#333;font-weight:400;white-space:nowrap;text-align:right;letter-spacing:-0.35px;">138 PT</div>
<div style="position:absolute;right:693.8000000000002px;top:741.7px;height:20px;line-height:20px;font-size:11.5px;color:#333;font-weight:400;white-space:nowrap;text-align:right;letter-spacing:-0.35px;">730 PT</div>
<div style="position:absolute;right:606.5px;top:741.7px;height:20px;line-height:20px;font-size:11.5px;color:#f0f8f0;font-weight:400;white-space:nowrap;text-align:right;letter-spacing:-0.2px;">-3 PT</div>
<div style="position:absolute;right:520.8px;top:741.7px;height:20px;line-height:20px;font-size:11.5px;color:#f0f8f0;font-weight:400;white-space:nowrap;text-align:right;letter-spacing:-0.2px;">-0.36 %</div>
<div style="position:absolute;right:432.8000000000002px;top:741.7px;height:20px;line-height:20px;font-size:11.5px;color:#333;font-weight:400;white-space:nowrap;text-align:right;letter-spacing:-0.35px;">1186 PT</div>
<div style="position:absolute;left:106px;top:763px;width:1194px;height:1px;background:#a9a9a9;"></div>
<div style="position:absolute;left:106px;top:764px;width:1194px;height:1px;background:#dcdcdc;"></div>
<div style="position:absolute;left:257px;top:765px;width:130px;height:20px;background:#ffffff;"></div>
<div style="position:absolute;left:387px;top:765px;width:913px;height:20px;background:#eeeeee;"></div>
<div style="position:absolute;left:257px;top:765px;width:1px;height:20px;background:#d4d4d4;"></div>
<div style="position:absolute;left:387px;top:765px;width:1px;height:20px;background:#d9d9d9;"></div>
<div style="position:absolute;left:474px;top:765px;width:1px;height:20px;background:#d9d9d9;"></div>
<div style="position:absolute;left:561px;top:765px;width:1px;height:20px;background:#d9d9d9;"></div>
<div style="position:absolute;left:648px;top:765px;width:1px;height:20px;background:#d9d9d9;"></div>
<div style="position:absolute;left:778px;top:765px;width:1px;height:20px;background:#d9d9d9;"></div>
<div style="position:absolute;left:865px;top:765px;width:1px;height:20px;background:#d9d9d9;"></div>
<div style="position:absolute;left:952px;top:765px;width:1px;height:20px;background:#d9d9d9;"></div>
<div style="position:absolute;left:1039px;top:765px;width:1px;height:20px;background:#d9d9d9;"></div>
<div style="position:absolute;left:1126px;top:765px;width:1px;height:20px;background:#d9d9d9;"></div>
<div style="position:absolute;left:1213px;top:765px;width:1px;height:20px;background:#d9d9d9;"></div>
<div style="position:absolute;left:1300px;top:765px;width:1px;height:20px;background:#d9d9d9;"></div>
<div style="position:absolute;left:1039px;top:765px;width:87px;height:20px;background:#3f8a57;"></div>
<div style="position:absolute;left:1126px;top:765px;width:86px;height:20px;background:#3f8a57;"></div>
<svg style="position:absolute;left:109px;top:769px" width="17" height="11"><path d="M0,9.6 L7.5,1 L15,9.6 Z" fill="#1aa51a"/></svg>
<div style="position:absolute;left:132.5px;top:763.7px;height:20px;line-height:20px;font-size:11.2px;color:#111;font-weight:400;white-space:nowrap;">IT-Extern</div>
<div style="position:absolute;right:1345.8px;top:763.7px;height:20px;line-height:20px;font-size:11.5px;color:#111;font-weight:400;white-space:nowrap;text-align:right;letter-spacing:-0.35px;">100 PT</div>
<div style="position:absolute;right:1258.8px;top:763.7px;height:20px;line-height:20px;font-size:11.5px;color:#333;font-weight:400;white-space:nowrap;text-align:right;letter-spacing:-0.35px;">100 PT</div>
<div style="position:absolute;right:1171.8px;top:763.7px;height:20px;line-height:20px;font-size:11.5px;color:#333;font-weight:400;white-space:nowrap;text-align:right;letter-spacing:-0.35px;">97 PT</div>
<div style="position:absolute;right:1084.8px;top:763.7px;height:20px;line-height:20px;font-size:11.5px;color:#333;font-weight:400;white-space:nowrap;text-align:right;letter-spacing:-0.35px;">100 PT</div>
<div style="position:absolute;right:954.8px;top:763.7px;height:20px;line-height:20px;font-size:11.5px;color:#333;font-weight:400;white-space:nowrap;text-align:right;letter-spacing:-0.35px;">100 PT</div>
<div style="position:absolute;right:867.8px;top:763.7px;height:20px;line-height:20px;font-size:11.5px;color:#333;font-weight:400;white-space:nowrap;text-align:right;letter-spacing:-0.35px;">45 PT</div>
<div style="position:absolute;right:780.8px;top:763.7px;height:20px;line-height:20px;font-size:11.5px;color:#333;font-weight:400;white-space:nowrap;text-align:right;letter-spacing:-0.35px;">45 PT</div>
<div style="position:absolute;right:693.8000000000002px;top:763.7px;height:20px;line-height:20px;font-size:11.5px;color:#333;font-weight:400;white-space:nowrap;text-align:right;letter-spacing:-0.35px;">99 PT</div>
<div style="position:absolute;right:606.5px;top:763.7px;height:20px;line-height:20px;font-size:11.5px;color:#f0f8f0;font-weight:400;white-space:nowrap;text-align:right;letter-spacing:-0.2px;">-1 PT</div>
<div style="position:absolute;right:520.8px;top:763.7px;height:20px;line-height:20px;font-size:11.5px;color:#f0f8f0;font-weight:400;white-space:nowrap;text-align:right;letter-spacing:-0.2px;">-0.50 %</div>
<div style="position:absolute;right:432.8000000000002px;top:763.7px;height:20px;line-height:20px;font-size:11.5px;color:#333;font-weight:400;white-space:nowrap;text-align:right;letter-spacing:-0.35px;">235 PT</div>
<div style="position:absolute;left:257px;top:785px;width:1043px;height:1px;background:#cdcdcd;"></div>
<div style="position:absolute;left:1039px;top:740px;width:87px;height:1px;background:#3f8a57;"></div>
<div style="position:absolute;left:1039px;top:741px;width:87px;height:1px;background:#9ccaa6;"></div>
<div style="position:absolute;left:1039px;top:742px;width:87px;height:1px;background:#519563;"></div>
<div style="position:absolute;left:1039px;top:763px;width:87px;height:1px;background:#9ccaa6;"></div>
<div style="position:absolute;left:1039px;top:764px;width:87px;height:1px;background:#3f8a57;"></div>
<div style="position:absolute;left:1126px;top:740px;width:87px;height:1px;background:#3f8a57;"></div>
<div style="position:absolute;left:1126px;top:741px;width:87px;height:1px;background:#9ccaa6;"></div>
<div style="position:absolute;left:1126px;top:742px;width:86px;height:1px;background:#519563;"></div>
<div style="position:absolute;left:1126px;top:763px;width:86px;height:1px;background:#9ccaa6;"></div>
<div style="position:absolute;left:1126px;top:764px;width:86px;height:1px;background:#3f8a57;"></div>
<div style="position:absolute;right:1348.5px;top:803.0px;height:20px;line-height:20px;font-size:11px;color:#111;font-weight:700;white-space:nowrap;text-align:right;">Nutzen</div>
<div style="position:absolute;right:1262.5px;top:803.0px;height:20px;line-height:20px;font-size:11px;color:#555;font-weight:400;white-space:nowrap;text-align:right;">Geplant</div>
<div style="position:absolute;right:1175.5px;top:803.0px;height:20px;line-height:20px;font-size:11px;color:#555;font-weight:400;white-space:nowrap;text-align:right;">Erreicht</div>
<div style="position:absolute;right:1088.5px;top:803.0px;height:20px;line-height:20px;font-size:11px;color:#555;font-weight:400;white-space:nowrap;text-align:right;">Resultierend</div>
<div style="position:absolute;right:958.5px;top:803.0px;height:20px;line-height:20px;font-size:11px;color:#555;font-weight:400;white-space:nowrap;text-align:right;">Abw. Budget</div>
<div style="position:absolute;right:871.5px;top:803.0px;height:20px;line-height:20px;font-size:11px;color:#111;font-weight:700;white-space:nowrap;text-align:right;">Erlöse</div>
<div style="position:absolute;right:784.5px;top:803.0px;height:20px;line-height:20px;font-size:11px;color:#555;font-weight:400;white-space:nowrap;text-align:right;">Ist</div>
<div style="position:absolute;right:697.5px;top:803.0px;height:20px;line-height:20px;font-size:11px;color:#555;font-weight:400;white-space:nowrap;text-align:right;">Rest</div>
<div style="position:absolute;right:610.5px;top:803.0px;height:20px;line-height:20px;font-size:11px;color:#555;font-weight:400;white-space:nowrap;text-align:right;">Gesamt</div>
<div style="position:absolute;right:523.5px;top:803.0px;height:20px;line-height:20px;font-size:11px;color:#555;font-weight:400;white-space:nowrap;text-align:right;">Abw. Budget</div>
<div style="position:absolute;left:116.4px;top:823.0px;height:20px;line-height:20px;font-size:10.6px;color:#111;font-weight:700;white-space:nowrap;">Nutzen + Erlöse</div>
<div style="position:absolute;right:1259.3px;top:823.0px;height:20px;line-height:20px;font-size:11px;color:#111;font-weight:400;white-space:nowrap;text-align:right;">915.000 €</div>
<div style="position:absolute;right:1085.3px;top:823.0px;height:20px;line-height:20px;font-size:11px;color:#111;font-weight:400;white-space:nowrap;text-align:right;">915.000 €</div>
<div style="position:absolute;right:955.3px;top:823.0px;height:20px;line-height:20px;font-size:11px;color:#111;font-weight:400;white-space:nowrap;text-align:right;">-210.979 €</div>
<div style="position:absolute;right:694.3px;top:823.0px;height:20px;line-height:20px;font-size:11px;color:#111;font-weight:400;white-space:nowrap;text-align:right;">200.000 €</div>
<div style="position:absolute;right:607.3px;top:823.0px;height:20px;line-height:20px;font-size:11px;color:#111;font-weight:400;white-space:nowrap;text-align:right;">200.000 €</div>
<div style="position:absolute;right:520.3px;top:823.0px;height:20px;line-height:20px;font-size:11px;color:#111;font-weight:400;white-space:nowrap;text-align:right;">-925.979 €</div>
</body></html>
